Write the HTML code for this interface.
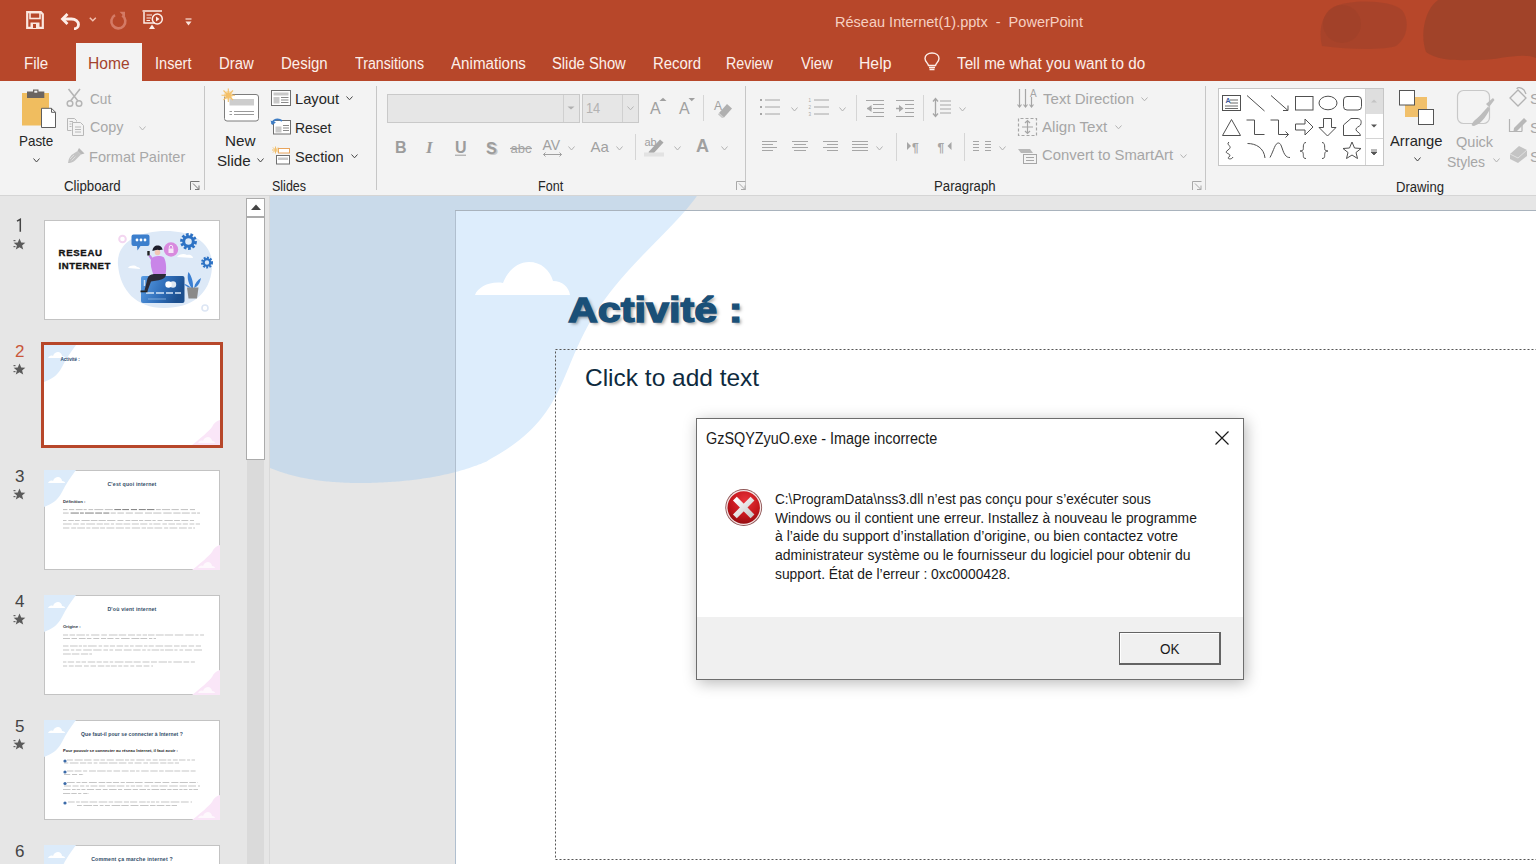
<!DOCTYPE html>
<html><head><meta charset="utf-8">
<style>
*{margin:0;padding:0;box-sizing:border-box}
html,body{width:1536px;height:864px;overflow:hidden;background:#e6e6e6;font-family:"Liberation Sans",sans-serif;}
.a{position:absolute}
.t{position:absolute;white-space:nowrap;line-height:1;transform-origin:0 0}
.num{position:absolute;left:12px;font-size:17px;color:#444;line-height:1}
</style></head><body>
<div class="a" style="left:0;top:0;width:1536px;height:81px;background:#b7472a"></div>
<svg class="a" style="left:1300px;top:0" width="236" height="81" viewBox="1300 0 236 81">
<path d="M1322,46 C1318,30 1322,12 1336,6 C1352,-1 1392,0 1402,10 C1410,20 1408,38 1396,46 C1386,50 1350,50 1322,46 Z" fill="#a6432a" opacity=".85"/>
<circle cx="1342" cy="24" r="19" fill="#9c4128" opacity=".45"/>
<path d="M1426,52 C1420,36 1424,10 1438,0 L1536,0 L1536,58 C1520,52 1500,60 1480,60 C1460,60 1440,62 1426,52 Z" fill="#9f4229" opacity=".9"/>
</svg>
<svg class="a" style="left:26px;top:11px" width="18" height="18" viewBox="0 0 18 18">
<path d="M1.2,1.2 H14.8 L16.8,3.2 V16.8 H1.2 Z" fill="none" stroke="#fbe7df" stroke-width="2.2"/>
<rect x="4" y="1.5" width="10" height="6" fill="none" stroke="#fbe7df" stroke-width="1.6"/>
<path d="M4.5,17 V11.5 H13.5 V17" fill="#fbe7df"/><rect x="7" y="13" width="3" height="4" fill="#b7472a"/>
</svg>
<svg class="a" style="left:60px;top:12px" width="21" height="18" viewBox="0 0 21 18">
<path d="M3.5,7 H11.5 C15.5,7 18.5,9.5 18.5,12.5 C18.5,15 16.5,16.8 14,16.8" fill="none" stroke="#fdeee8" stroke-width="2.8"/>
<path d="M7.5,2 L2.5,7 L7.5,12" fill="none" stroke="#fdeee8" stroke-width="2.8"/>
</svg>
<svg class="a" style="left:89px;top:17px" width="8" height="5"><path d="M0.8,0.8 L3.8,3.8 L6.8,0.8" fill="none" stroke="#f3c2b2" stroke-width="1.5"/></svg>
<svg class="a" style="left:109px;top:11px" width="19" height="19" viewBox="0 0 19 19">
<path d="M13.2,4.5 A7,7 0 1 1 6,4.2" fill="none" stroke="#d47a65" stroke-width="2.6"/>
<path d="M10.5,0.8 L16,0.8 L16,6.3 Z" fill="#d47a65"/>
</svg>
<svg class="a" style="left:142px;top:10px" width="22" height="20" viewBox="0 0 22 20">
<path d="M0.5,1 H20" stroke="#fdeee8" stroke-width="1.5"/>
<path d="M2,2 V13 H13" fill="none" stroke="#fdeee8" stroke-width="1.5"/>
<path d="M4.5,5 H10 M4.5,8 H9 M4.5,10.5 H8" stroke="#fdeee8" stroke-width="1.2"/>
<circle cx="15.3" cy="9" r="5" fill="none" stroke="#fdeee8" stroke-width="1.5"/>
<path d="M14,6.5 L17.5,9 L14,11.5 Z" fill="#fdeee8"/>
<path d="M7,19 L10,14.5 L13,19 Z" fill="#fdeee8"/>
</svg>
<svg class="a" style="left:185px;top:18px" width="7" height="8" viewBox="0 0 7 8">
<path d="M0.5,1 H6.5" stroke="#fbe3da" stroke-width="1.2"/><path d="M0.5,3.5 H6.5 L3.5,7.5 Z" fill="#fbe3da"/>
</svg>
<div class="t" style="left:834.53px;top:14.20px;font-size:15px;color:#f6d0c2;transform:scaleX(0.9686);">Réseau Internet(1).pptx&nbsp; - &nbsp;PowerPoint</div>
<div class="a" style="left:76px;top:43px;width:66px;height:38px;background:#f3f3f3"></div>
<div class="t" style="left:23.56px;top:55.80px;font-size:16px;color:#fdf0ea;transform:scaleX(0.9400);">File</div>
<div class="t" style="left:155.39px;top:55.80px;font-size:16px;color:#fdf0ea;transform:scaleX(0.9103);">Insert</div>
<div class="t" style="left:218.57px;top:55.80px;font-size:16px;color:#fdf0ea;transform:scaleX(0.9297);">Draw</div>
<div class="t" style="left:280.66px;top:55.80px;font-size:16px;color:#fdf0ea;transform:scaleX(0.9375);">Design</div>
<div class="t" style="left:354.70px;top:55.80px;font-size:16px;color:#fdf0ea;transform:scaleX(0.8885);">Transitions</div>
<div class="t" style="left:451.20px;top:55.80px;font-size:16px;color:#fdf0ea;transform:scaleX(0.9468);">Animations</div>
<div class="t" style="left:552.28px;top:55.80px;font-size:16px;color:#fdf0ea;transform:scaleX(0.9215);">Slide Show</div>
<div class="t" style="left:652.57px;top:55.80px;font-size:16px;color:#fdf0ea;transform:scaleX(0.9300);">Record</div>
<div class="t" style="left:726.41px;top:55.80px;font-size:16px;color:#fdf0ea;transform:scaleX(0.8923);">Review</div>
<div class="t" style="left:800.80px;top:55.80px;font-size:16px;color:#fdf0ea;transform:scaleX(0.9200);">View</div>
<div class="t" style="left:859.02px;top:55.80px;font-size:16px;color:#fdf0ea;transform:scaleX(0.9844);">Help</div>
<div class="t" style="left:956.50px;top:55.80px;font-size:16px;color:#fdf0ea;transform:scaleX(0.9538);">Tell me what you want to do</div>
<div class="t" style="left:87.52px;top:55.80px;font-size:16px;color:#a4432e;transform:scaleX(0.9756);">Home</div>
<svg class="a" style="left:923px;top:52px" width="18" height="20" viewBox="0 0 18 20">
<path d="M5.5,13.5 C5,11 2,9.5 2,6.5 C2,3.2 5,1 9,1 C13,1 16,3.2 16,6.5 C16,9.5 13,11 12.5,13.5 Z" fill="none" stroke="#fdeee8" stroke-width="1.4"/>
<path d="M6,15.5 H12 M6.5,17.5 H11.5" stroke="#fdeee8" stroke-width="1.3"/>
</svg>
<div class="a" style="left:0;top:81px;width:1536px;height:114px;background:#f3f3f3"></div>
<div class="a" style="left:0;top:195px;width:1536px;height:1px;background:#d5d5d5"></div>
<div class="a" style="left:204px;top:86px;width:1px;height:104px;background:#c6c6c6"></div>
<div class="a" style="left:376px;top:86px;width:1px;height:104px;background:#c6c6c6"></div>
<div class="a" style="left:745px;top:86px;width:1px;height:104px;background:#c6c6c6"></div>
<div class="a" style="left:1205px;top:86px;width:1px;height:104px;background:#c6c6c6"></div>
<svg class="a" style="left:20px;top:88px" width="40" height="42" viewBox="20 88 40 42">
<rect x="22" y="93" width="27" height="32.5" fill="#f0bd5f"/>
<rect x="27" y="91.5" width="17.3" height="6.5" fill="#6b6561"/>
<rect x="33" y="89.5" width="5.5" height="4" fill="#6b6561"/><rect x="34.3" y="90.7" width="3" height="2" fill="#f3f3f3"/>
<path d="M41.5,108.3 H51.5 L55.5,112.3 V127.5 H41.5 Z" fill="#fff" stroke="#5e5e5e" stroke-width="1"/>
<path d="M51.5,108.3 V112.3 H55.5" fill="none" stroke="#5e5e5e" stroke-width="1"/>
</svg>
<div class="t" style="left:18.51px;top:132.60px;font-size:15px;color:#262626;transform:scaleX(0.8946);">Paste</div>
<svg class="a" style="left:33.0px;top:157.5px" width="7" height="4"><path d="M0.5,0.5 L3.5,4.0 L6.5,0.5" fill="none" stroke="#444" stroke-width="1"/></svg>
<svg class="a" style="left:66px;top:88px" width="19" height="20" viewBox="0 0 19 20">
<path d="M2.5,1 L12,13 M14,1 L4.5,13" stroke="#b5b5b5" stroke-width="1.6"/>
<circle cx="4" cy="15.5" r="2.8" fill="none" stroke="#b5b5b5" stroke-width="1.5"/>
<circle cx="13" cy="15.5" r="2.8" fill="none" stroke="#b5b5b5" stroke-width="1.5"/>
</svg>
<svg class="a" style="left:66px;top:117px" width="20" height="20" viewBox="0 0 20 20">
<path d="M1.5,1.5 H8.5 L10.5,3.5 V4.5" fill="none" stroke="#b8b8b8" stroke-width="1"/>
<path d="M1.5,1.5 V13.5 H5.5" fill="none" stroke="#b8b8b8" stroke-width="1"/>
<path d="M3.5,4.5 H7 M3.5,7 H5.5 M3.5,9.5 H5.5" stroke="#b8b8b8" stroke-width="1"/>
<path d="M6.5,5.5 H14.5 L17.5,8.5 V18.5 H6.5 Z" fill="#f3f3f3" stroke="#b8b8b8" stroke-width="1"/>
<path d="M9,10 H15 M9,12.5 H15 M9,15 H15" stroke="#b8b8b8" stroke-width="1"/>
</svg>
<svg class="a" style="left:67px;top:147px" width="19" height="17" viewBox="0 0 19 17">
<path d="M12,1 L17.5,6.5 L14,7.5 L10.5,4 Z" fill="#b8b8b8"/>
<path d="M10.5,4 L14,7.5 L8,13.5 C6,15.5 3,16 1,16 C1.5,13 2,10.5 4.5,8 Z" fill="#c4c4c4"/>
<path d="M3,12 L7,8 M4.5,13.5 L8.5,9.5" stroke="#dcdcdc" stroke-width="1"/>
</svg>
<div class="t" style="left:90.00px;top:91.40px;font-size:15px;color:#a8a8a8;transform:scaleX(0.9083);">Cut</div>
<div class="t" style="left:90.00px;top:118.90px;font-size:15px;color:#a8a8a8;transform:scaleX(0.9571);">Copy</div>
<div class="t" style="left:89.43px;top:149.30px;font-size:15px;color:#a8a8a8;transform:scaleX(0.9704);">Format Painter</div>
<svg class="a" style="left:139.0px;top:125.5px" width="7" height="4"><path d="M0.5,0.5 L3.5,4.0 L6.5,0.5" fill="none" stroke="#b8b8b8" stroke-width="1"/></svg>
<div class="t" style="left:63.60px;top:178.90px;font-size:14px;color:#262626;transform:scaleX(0.9467);">Clipboard</div>
<svg class="a" style="left:189.5px;top:180.5px" width="11" height="10" viewBox="0 0 11 10"><path d="M0.5,9 V0.5 H9.5" fill="none" stroke="#777" stroke-width="1"/><path d="M3,2.5 L9,8.5 M5,8.5 H9 V4.5" fill="none" stroke="#777" stroke-width="1"/></svg>
<svg class="a" style="left:218px;top:87px" width="45" height="37" viewBox="218 87 45 37">
<rect x="224.5" y="94.5" width="34" height="26.5" rx="2.5" fill="#fff" stroke="#7d7d7d" stroke-width="1"/>
<rect x="229.5" y="99" width="24.5" height="6.5" fill="#cdcdcd"/>
<path d="M229.5,111.5 H232 M234,111.5 H254 M229.5,114.5 H232 M234,114.5 H254" stroke="#9a9a9a" stroke-width="1"/>
<circle cx="228.3" cy="95.3" r="4.3" fill="#f5d9a6"/>
<circle cx="228.3" cy="95.3" r="2.6" fill="#f3c06a"/>
<path d="M228.3,88.5 V102 M221.5,95.3 H235 M223.5,90.5 L233,100 M233,90.5 L223.5,100" stroke="#f3c06a" stroke-width="1.1"/>
</svg>
<div class="t" style="left:225.28px;top:132.60px;font-size:15px;color:#262626;transform:scaleX(1.0172);">New</div>
<div class="t" style="left:216.59px;top:152.60px;font-size:15px;color:#262626;transform:scaleX(1.0094);">Slide</div>
<svg class="a" style="left:256.5px;top:157.5px" width="7" height="4"><path d="M0.5,0.5 L3.5,4.0 L6.5,0.5" fill="none" stroke="#444" stroke-width="1"/></svg>
<svg class="a" style="left:270px;top:89px" width="22" height="18" viewBox="270 89 22 18">
<rect x="271.5" y="90.5" width="19" height="15" fill="#fff" stroke="#6f6f6f" stroke-width="1"/>
<rect x="273.5" y="92.5" width="15" height="3" fill="#c9c9c9"/>
<rect x="273.5" y="97" width="6" height="6.5" fill="#c9c9c9"/>
<path d="M281,97.5 H288.5 M281,100 H288.5 M281,102.5 H288.5" stroke="#8a8a8a" stroke-width="1"/>
</svg>
<svg class="a" style="left:270px;top:117px" width="22" height="19" viewBox="270 117 22 19">
<rect x="273.5" y="120.5" width="17" height="13.5" fill="#fff" stroke="#6f6f6f" stroke-width="1"/>
<rect x="275.5" y="126.5" width="6" height="6" fill="#c9c9c9"/>
<path d="M283,125.5 H289 M283,128 H289 M283,130.5 H289" stroke="#8a8a8a" stroke-width="1"/>
<path d="M272,124 C273,119.5 278,118 282,121" fill="none" stroke="#3f7dc4" stroke-width="1.8"/>
<path d="M270.5,120.5 L272,125 L276,122.5 Z" fill="#3f7dc4"/>
</svg>
<svg class="a" style="left:271px;top:146px" width="21" height="20" viewBox="271 146 21 20">
<rect x="278.5" y="148.5" width="11" height="4.5" fill="#fff" stroke="#e8a45c" stroke-width="1"/>
<rect x="276.5" y="155.5" width="13" height="8.5" fill="#fff" stroke="#6f6f6f" stroke-width="1"/>
<rect x="278" y="157.5" width="10" height="2.5" fill="#c9c9c9"/>
<path d="M275.5,146.5 V153.5 M272,150 H279 M273,147.5 L278,152.5 M278,147.5 L273,152.5" stroke="#f3c06a" stroke-width="1"/>
</svg>
<div class="t" style="left:294.72px;top:90.50px;font-size:15px;color:#262626;transform:scaleX(0.9795);">Layout</div>
<div class="t" style="left:294.77px;top:119.80px;font-size:15px;color:#262626;transform:scaleX(0.9289);">Reset</div>
<div class="t" style="left:294.73px;top:149.00px;font-size:15px;color:#262626;transform:scaleX(0.9735);">Section</div>
<svg class="a" style="left:345.5px;top:96.0px" width="7" height="4"><path d="M0.5,0.5 L3.5,3.8 L6.5,0.5" fill="none" stroke="#444" stroke-width="1"/></svg>
<svg class="a" style="left:350.5px;top:154.2px" width="7" height="4"><path d="M0.5,0.5 L3.5,3.8 L6.5,0.5" fill="none" stroke="#444" stroke-width="1"/></svg>
<div class="t" style="left:272.41px;top:179.10px;font-size:14px;color:#262626;transform:scaleX(0.8919);">Slides</div>
<div class="a" style="left:387px;top:94px;width:193px;height:29px;background:#e6e6e6;border:1px solid #c9c9c9"></div>
<div class="a" style="left:563px;top:95px;width:1px;height:27px;background:#d0d0d0"></div>
<svg class="a" style="left:567px;top:106px" width="8" height="4"><path d="M0.5,0.5 H7.5 L4,3.5 Z" fill="#b0b0b0"/></svg>
<div class="a" style="left:582px;top:94px;width:57px;height:29px;background:#e6e6e6;border:1px solid #c9c9c9"></div>
<div class="a" style="left:622px;top:95px;width:1px;height:27px;background:#d0d0d0"></div>
<svg class="a" style="left:627.0px;top:106.0px" width="7" height="4"><path d="M0.5,0.5 L3.5,3.8 L6.5,0.5" fill="none" stroke="#b5b5b5" stroke-width="1"/></svg>
<div class="t" style="left:585.75px;top:100.30px;font-size:15px;color:#b3b3b3;transform:scaleX(0.8500);">14</div>
<svg class="a" style="left:649px;top:97px" width="46" height="19" viewBox="649 97 46 19">
<text x="650" y="114" font-family="Liberation Sans" font-size="16" fill="#a0a0a0">A</text>
<path d="M659.5,101 L663,97.8 L666.5,101 Z" fill="#a0a0a0"/>
<text x="679" y="114" font-family="Liberation Sans" font-size="16" fill="#a0a0a0">A</text>
<path d="M688.5,98 L695,98 L691.75,101.2 Z" fill="#a0a0a0"/>
</svg>
<div class="a" style="left:703px;top:95px;width:1px;height:26px;background:#d5d5d5"></div>
<svg class="a" style="left:713px;top:97px" width="21" height="22" viewBox="713 97 21 22">
<text x="714" y="110" font-family="Liberation Sans" font-size="12" fill="#a0a0a0">A</text>
<path d="M719,113 L727,104 L732,108.5 L724,117.5 Z" fill="#b0b0b0"/>
<path d="M719,113 L724,117.5 L722,118 L718,114.5 Z" fill="#c8c8c8"/>
</svg>
<svg class="a" style="left:390px;top:136px" width="150" height="22" viewBox="390 136 150 22">
<text x="395" y="153" font-family="Liberation Sans" font-weight="bold" font-size="16" fill="#9c9c9c">B</text>
<text x="426" y="153" font-family="Liberation Serif" font-style="italic" font-weight="bold" font-size="17" fill="#9c9c9c">I</text>
<text x="455" y="153" font-family="Liberation Sans" font-weight="bold" font-size="16" fill="#9c9c9c">U</text>
<path d="M455,155.2 H466" stroke="#9c9c9c" stroke-width="1"/>
<text x="487.5" y="154.5" font-family="Liberation Sans" font-weight="bold" font-size="16" fill="#c8c8c8">S</text>
<text x="486" y="153.5" font-family="Liberation Sans" font-weight="bold" font-size="16" fill="#9c9c9c">S</text>
<text x="510.5" y="153" font-family="Liberation Sans" font-size="13" fill="#a4a4a4">abc</text>
<path d="M510,148.5 H532" stroke="#a4a4a4" stroke-width="1.2"/>
</svg>
<svg class="a" style="left:540px;top:137px" width="28" height="22" viewBox="540 137 28 22">
<text x="542.5" y="150" font-family="Liberation Sans" font-size="14" fill="#a0a0a0">AV</text>
<path d="M543.5,154.5 H561.5 M545.5,152.5 L543.5,154.5 L545.5,156.5 M559.5,152.5 L561.5,154.5 L559.5,156.5" fill="none" stroke="#a0a0a0" stroke-width="1"/>
</svg>
<svg class="a" style="left:568.0px;top:146.0px" width="7" height="4"><path d="M0.5,0.5 L3.5,4.0 L6.5,0.5" fill="none" stroke="#b3b3b3" stroke-width="1"/></svg>
<svg class="a" style="left:589px;top:139px" width="22" height="16" viewBox="589 139 22 16"><text x="590.5" y="152" font-family="Liberation Sans" font-size="15" fill="#a0a0a0">Aa</text></svg>
<svg class="a" style="left:616.0px;top:146.0px" width="7" height="4"><path d="M0.5,0.5 L3.5,4.0 L6.5,0.5" fill="none" stroke="#b3b3b3" stroke-width="1"/></svg>
<div class="a" style="left:635px;top:134px;width:1px;height:26px;background:#d5d5d5"></div>
<svg class="a" style="left:643px;top:135px" width="22" height="23" viewBox="643 135 22 23">
<text x="644.5" y="145.5" font-family="Liberation Sans" font-size="11" fill="#a0a0a0">ab</text>
<path d="M649,151.5 L660,139.5 L663.5,142.5 L652.5,154.5 L648,155 Z" fill="#a8a8a8"/>
<rect x="644" y="152.5" width="20" height="4" fill="#e2e2e2"/>
</svg>
<svg class="a" style="left:674.0px;top:146.0px" width="7" height="4"><path d="M0.5,0.5 L3.5,4.0 L6.5,0.5" fill="none" stroke="#b3b3b3" stroke-width="1"/></svg>
<svg class="a" style="left:695px;top:136px" width="18" height="18" viewBox="695 136 18 18"><text x="696" y="151.5" font-family="Liberation Sans" font-weight="bold" font-size="18" fill="#a0a0a0">A</text></svg>
<svg class="a" style="left:721.0px;top:146.0px" width="7" height="4"><path d="M0.5,0.5 L3.5,4.0 L6.5,0.5" fill="none" stroke="#b3b3b3" stroke-width="1"/></svg>
<div class="t" style="left:537.85px;top:178.90px;font-size:14px;color:#262626;transform:scaleX(0.8981);">Font</div>
<svg class="a" style="left:735.5px;top:180.5px" width="11" height="10" viewBox="0 0 11 10"><path d="M0.5,9 V0.5 H9.5" fill="none" stroke="#a8a8a8" stroke-width="1"/><path d="M3,2.5 L9,8.5 M5,8.5 H9 V4.5" fill="none" stroke="#a8a8a8" stroke-width="1"/></svg>
<svg class="a" style="left:758px;top:96px" width="210" height="24" viewBox="758 96 210 24">
<g fill="#a6a6a6"><rect x="760" y="99" width="2" height="2"/><rect x="760" y="106" width="2" height="2"/><rect x="760" y="113" width="2" height="2"/></g>
<path d="M765,100 H780 M765,107 H780 M765,114 H780" stroke="#a6a6a6" stroke-width="1"/>
<text x="808.5" y="102" font-family="Liberation Sans" font-size="4.5" fill="#a6a6a6">1</text>
<text x="808.5" y="109" font-family="Liberation Sans" font-size="4.5" fill="#a6a6a6">2</text>
<text x="808.5" y="116" font-family="Liberation Sans" font-size="4.5" fill="#a6a6a6">3</text>
<path d="M814,100 H829 M814,107 H829 M814,114 H829" stroke="#a6a6a6" stroke-width="1"/>
<path d="M866,100.5 H884 M873,104.5 H884 M873,108.5 H884 M873,112.5 H884 M866,116.5 H884" stroke="#a6a6a6" stroke-width="1"/>
<path d="M871.5,105 L867,108.5 L871.5,112 Z" fill="#a6a6a6"/><path d="M867,108.5 H872" stroke="#a6a6a6" stroke-width="1.5"/>
<path d="M896,100.5 H914 M905,104.5 H914 M905,108.5 H914 M905,112.5 H914 M896,116.5 H914" stroke="#a6a6a6" stroke-width="1"/>
<path d="M899,105 L903.5,108.5 L899,112 Z" fill="#a6a6a6"/><path d="M896,108.5 H900" stroke="#a6a6a6" stroke-width="1.5"/>
<path d="M940,101 H951 M940,105 H951 M940,109 H951 M940,113 H951" stroke="#a6a6a6" stroke-width="1"/>
<path d="M935.5,99 V116 M933,101.5 L935.5,98.5 L938,101.5 M933,113.5 L935.5,116.5 L938,113.5" fill="none" stroke="#a6a6a6" stroke-width="1.3"/>
</svg>
<svg class="a" style="left:790.5px;top:106.5px" width="7" height="4"><path d="M0.5,0.5 L3.5,4.0 L6.5,0.5" fill="none" stroke="#b3b3b3" stroke-width="1"/></svg>
<svg class="a" style="left:838.5px;top:106.5px" width="7" height="4"><path d="M0.5,0.5 L3.5,4.0 L6.5,0.5" fill="none" stroke="#b3b3b3" stroke-width="1"/></svg>
<svg class="a" style="left:958.8px;top:106.5px" width="7" height="4"><path d="M0.5,0.5 L3.5,4.0 L6.5,0.5" fill="none" stroke="#b3b3b3" stroke-width="1"/></svg>
<div class="a" style="left:856px;top:95px;width:1px;height:26px;background:#d5d5d5"></div>
<div class="a" style="left:923px;top:95px;width:1px;height:26px;background:#d5d5d5"></div>
<svg class="a" style="left:758px;top:138px" width="250" height="18" viewBox="758 138 250 18">
<g stroke="#a6a6a6" stroke-width="1">
<path d="M762,141.5 H777 M762,144.5 H773 M762,147.5 H777 M762,150.5 H773"/>
<path d="M792,141.5 H808 M794,144.5 H806 M792,147.5 H808 M794,150.5 H806"/>
<path d="M823,141.5 H838 M827,144.5 H838 M823,147.5 H838 M827,150.5 H838"/>
<path d="M852,141.5 H868 M852,144.5 H868 M852,147.5 H868 M852,150.5 H868"/>
<path d="M973,141.5 H979 M973,144.5 H979 M973,147.5 H979 M973,150.5 H979 M985,141.5 H991 M985,144.5 H991 M985,147.5 H991 M985,150.5 H991"/>
</g>
<path d="M907,142 L911,146 L907,150 Z" fill="#a6a6a6"/>
<text x="912" y="151.5" font-family="Liberation Sans" font-weight="bold" font-size="12" fill="#a6a6a6">¶</text>
<text x="937.5" y="151.5" font-family="Liberation Sans" font-weight="bold" font-size="12" fill="#a6a6a6">¶</text>
<path d="M951.5,142 L947.5,146 L951.5,150 Z" fill="#a6a6a6"/>
</svg>
<svg class="a" style="left:876.0px;top:145.5px" width="7" height="4"><path d="M0.5,0.5 L3.5,4.0 L6.5,0.5" fill="none" stroke="#b3b3b3" stroke-width="1"/></svg>
<svg class="a" style="left:998.6px;top:145.5px" width="7" height="4"><path d="M0.5,0.5 L3.5,4.0 L6.5,0.5" fill="none" stroke="#b3b3b3" stroke-width="1"/></svg>
<div class="a" style="left:896px;top:133px;width:1px;height:28px;background:#d5d5d5"></div>
<div class="a" style="left:964px;top:133px;width:1px;height:28px;background:#d5d5d5"></div>
<svg class="a" style="left:1016px;top:87px" width="24" height="80" viewBox="1016 87 24 80">
<g stroke="#a6a6a6" stroke-width="1.2" fill="none">
<path d="M1019.5,89 V107 M1025.5,89 V107 M1031.5,97 V107"/>
<path d="M1017.5,104.5 L1019.5,107 L1021.5,104.5 M1023.5,104.5 L1025.5,107 L1027.5,104.5 M1029.5,104.5 L1031.5,107 L1033.5,104.5"/>
<path d="M1018.5,118.5 V135.5 H1036.5 V118.5 Z" stroke-dasharray="3,2"/>
<path d="M1027.5,120.5 V133.5 M1025,123 L1027.5,120.5 L1030,123 M1025,131 L1027.5,133.5 L1030,131 M1022,127 H1033"/>
</g>
<text x="1030" y="97" font-family="Liberation Sans" font-size="10" fill="#a6a6a6">A</text>
<path d="M1018,149 H1030 L1033,153 H1021 Z" fill="#b8b8b8"/>
<rect x="1023.5" y="154.5" width="13" height="9" fill="#f3f3f3" stroke="#a6a6a6"/>
<path d="M1026,157.5 H1034 M1026,160.5 H1034" stroke="#a6a6a6"/>
</svg>
<div class="t" style="left:1043.00px;top:90.90px;font-size:15px;color:#a6a6a6;transform:scaleX(1.0022);">Text Direction</div>
<div class="t" style="left:1042.30px;top:119.30px;font-size:15px;color:#a6a6a6;transform:scaleX(1.0077);">Align Text</div>
<div class="t" style="left:1042.30px;top:147.40px;font-size:15px;color:#a6a6a6;transform:scaleX(0.9895);">Convert to SmartArt</div>
<svg class="a" style="left:1141.0px;top:96.5px" width="7" height="4"><path d="M0.5,0.5 L3.5,3.8 L6.5,0.5" fill="none" stroke="#b3b3b3" stroke-width="1"/></svg>
<svg class="a" style="left:1115.0px;top:125.0px" width="7" height="4"><path d="M0.5,0.5 L3.5,3.8 L6.5,0.5" fill="none" stroke="#b3b3b3" stroke-width="1"/></svg>
<svg class="a" style="left:1180.0px;top:154.0px" width="7" height="4"><path d="M0.5,0.5 L3.5,3.8 L6.5,0.5" fill="none" stroke="#b3b3b3" stroke-width="1"/></svg>
<div class="t" style="left:934.26px;top:178.90px;font-size:14px;color:#262626;transform:scaleX(0.9422);">Paragraph</div>
<svg class="a" style="left:1192.0px;top:180.5px" width="11" height="10" viewBox="0 0 11 10"><path d="M0.5,9 V0.5 H9.5" fill="none" stroke="#a8a8a8" stroke-width="1"/><path d="M3,2.5 L9,8.5 M5,8.5 H9 V4.5" fill="none" stroke="#a8a8a8" stroke-width="1"/></svg>
<div class="a" style="left:1218px;top:88px;width:166px;height:78px;background:#fff;border:1px solid #c6c6c6"></div>
<div class="a" style="left:1365px;top:89px;width:18px;height:25px;background:#dedede"></div>
<div class="a" style="left:1365px;top:89px;width:1px;height:76px;background:#d4d4d4"></div>
<div class="a" style="left:1365px;top:138px;width:18px;height:1px;background:#d4d4d4"></div>
<svg class="a" style="left:1218px;top:88px" width="166" height="78" viewBox="1218 88 166 78">
<path d="M1371,102.5 L1374,99.5 L1377,102.5 Z" fill="#c4c4c4"/>
<path d="M1371,124.5 H1377 L1374,127.5 Z" fill="#555"/>
<path d="M1371,150 H1377 M1371,152 H1377 L1374,155 Z" fill="#555" stroke="#555" stroke-width=".8"/>
<g fill="none" stroke="#505050" stroke-width="1">
<rect x="1222.5" y="95.5" width="18" height="15"/>
<path d="M1230,100 H1238 M1230,103 H1238 M1225,106 H1238 M1225,108.5 H1238" stroke="#6a6a6a"/>
<path d="M1247,95.5 L1264.5,111"/>
<path d="M1271,95.5 L1288,110.5 M1283,110.5 H1288 V105.5"/>
<rect x="1295.5" y="96.5" width="17.5" height="13.5"/>
<ellipse cx="1328" cy="103" rx="9" ry="6.8"/>
<rect x="1343.5" y="96.5" width="18" height="13.5" rx="3.5"/>
<path d="M1222.5,135.5 L1231.5,119.5 L1240.5,135.5 Z"/>
<path d="M1246.5,120 H1254.5 V134.5 H1264.5"/>
<path d="M1270.5,120 H1278.5 V134.5 H1288.5 M1285.5,131.5 L1288.5,134.5 L1285.5,137.5"/>
<path d="M1295.5,124 H1305 V119 L1313,127 L1305,135 V130 H1295.5 Z"/>
<path d="M1323.5,118.5 H1331.5 V127.5 H1336 L1327.5,136 L1319,127.5 H1323.5 Z"/>
<path d="M1343.5,135.5 V125 L1351,118.5 H1357 C1361,118.5 1362,121.5 1360.5,125 C1359,127 1356,127 1356,129.5 C1356,132 1360,132 1360.5,135.5 Z"/>
<path d="M1229,142 C1225,145 1234,146 1228,150 C1222,154 1233,153 1229,157 C1226,159 1232,160 1233,157"/>
<path d="M1247.5,143.5 C1256,143.5 1264,148 1265,158"/>
<path d="M1270,157.5 C1274,150 1275,143 1278.5,143 C1282,143 1282,152 1286,156 C1287,157 1288,157.5 1290,157.5"/>
<path d="M1306,142.5 C1302,142.5 1304,149 1303,150 C1302,151 1300,151 1300,151 C1302,151 1303,152 1303,153 C1304,155 1302,158.5 1306,158.5"/>
<path d="M1322,142.5 C1326,142.5 1324,149 1325,150 C1326,151 1328,151 1328,151 C1326,151 1325,152 1325,153 C1324,155 1326,158.5 1322,158.5"/>
<path d="M1352,142 L1354.5,148 L1361,148.5 L1356,152.5 L1357.5,158.5 L1352,155 L1346.5,158.5 L1348,152.5 L1343,148.5 L1349.5,148 Z"/>
</g>
<text x="1225.5" y="103" font-family="Liberation Sans" font-weight="bold" font-size="7" fill="#3b5a9a">A</text>
</svg>
<svg class="a" style="left:1397px;top:88px" width="40" height="40" viewBox="1397 88 40 40">
<rect x="1405" y="97" width="22" height="20" fill="#f1c06b"/>
<rect x="1399.5" y="90.5" width="15" height="14.5" fill="#fff" stroke="#555"/>
<rect x="1418.5" y="109.5" width="15" height="15" fill="#fff" stroke="#555"/>
</svg>
<div class="t" style="left:1390.30px;top:132.80px;font-size:15px;color:#262626;transform:scaleX(0.9830);">Arrange</div>
<svg class="a" style="left:1414.0px;top:157.0px" width="7" height="4"><path d="M0.5,0.5 L3.5,4.0 L6.5,0.5" fill="none" stroke="#444" stroke-width="1"/></svg>
<svg class="a" style="left:1455px;top:89px" width="40" height="40" viewBox="1455 89 40 40">
<rect x="1457.5" y="90.5" width="32" height="33" rx="6" fill="#f3f3f3" stroke="#c8c8c8" stroke-width="1.2"/>
<path d="M1486,104 L1493,98 L1494.5,100 L1489,107 Z" fill="#bdbdbd"/>
<path d="M1488,106.5 C1485,110 1480,116 1475,120 C1472,123 1470,126 1474,126 C1480,124 1485,119 1490,109 Z" fill="#bdbdbd"/>
</svg>
<div class="t" style="left:1456.40px;top:133.80px;font-size:15px;color:#a6a6a6;transform:scaleX(0.9684);">Quick</div>
<div class="t" style="left:1447.37px;top:153.50px;font-size:15px;color:#a6a6a6;transform:scaleX(0.9300);">Styles</div>
<svg class="a" style="left:1493.0px;top:157.5px" width="7" height="4"><path d="M0.5,0.5 L3.5,4.0 L6.5,0.5" fill="none" stroke="#b3b3b3" stroke-width="1"/></svg>
<svg class="a" style="left:1506px;top:87px" width="30" height="80" viewBox="1506 87 30 80">
<path d="M1510,98 L1518,90 L1526,98 L1518,106 Z" fill="none" stroke="#b3b3b3" stroke-width="1.3"/>
<path d="M1517,89 C1517,87 1521,87 1524,90 L1526,94" fill="none" stroke="#b3b3b3" stroke-width="1.3"/>
<path d="M1509.5,119 V131.5 H1522 M1522,124 V131.5" fill="none" stroke="#b3b3b3" stroke-width="1.2"/>
<path d="M1514,128 L1524,118 L1527,121 L1517,131 L1513.5,131.5 Z" fill="#b8b8b8"/>
<path d="M1510,154 L1519,146 L1527,150 L1527,156 L1518,163 L1510,159 Z" fill="#c4c4c4"/>
<path d="M1510,154 L1518,158 L1527,150" fill="none" stroke="#e0e0e0" stroke-width="1"/>
<text x="1530" y="104" font-family="Liberation Sans" font-size="15" fill="#a6a6a6">S</text>
<text x="1530" y="133" font-family="Liberation Sans" font-size="15" fill="#a6a6a6">S</text>
<text x="1530" y="162" font-family="Liberation Sans" font-size="15" fill="#a6a6a6">S</text>
</svg>
<div class="t" style="left:1395.56px;top:180.20px;font-size:14px;color:#262626;transform:scaleX(0.9360);">Drawing</div>
<!-- left panel -->
<div class="a" style="left:0;top:196px;width:269px;height:668px;background:#e6e6e6"></div>
<div class="a" style="left:269px;top:196px;width:2px;height:668px;background:#d9d9d9"></div>
<div class="a" style="left:247px;top:217px;width:17px;height:647px;background:#dadada"></div>
<div class="a" style="left:246px;top:198px;width:19px;height:19px;background:#fff;border:1px solid #ababab"></div>
<svg class="a" style="left:250px;top:203px" width="12" height="8"><path d="M1,7 L6,1.5 L11,7 Z" fill="#444"/></svg>
<div class="a" style="left:246px;top:217px;width:19px;height:243px;background:#fff;border:1px solid #ababab"></div>
<svg class="a" style="left:14px;top:218px" width="10" height="15" viewBox="0 0 10 15"><path d="M3,3.2 L6.3,1.3 V13.7" fill="none" stroke="#444" stroke-width="1.5"/></svg>
<div class="num" style="left:15px;top:343px;color:#c9563a;font-size:17px">2</div>
<div class="num" style="left:15px;top:468px;color:#444;font-size:17px">3</div>
<div class="num" style="left:15px;top:593px;color:#444;font-size:17px">4</div>
<div class="num" style="left:15px;top:718px;color:#444;font-size:17px">5</div>
<div class="num" style="left:15px;top:843px;color:#444;font-size:17px">6</div>
<svg class="a" style="left:10px;top:238px" width="16" height="13" viewBox="0 0 16 13"><path d="M9.5,0.5 L11.2,4.4 L15.3,4.7 L12.1,7.4 L13.2,11.5 L9.5,9.2 L5.8,11.5 L6.9,7.4 L3.7,4.7 L7.8,4.4 Z" fill="#5a5a5a"/><rect x="3.5" y="2" width="2" height="1.2" fill="#666"/><rect x="3.5" y="8" width="2" height="1.2" fill="#666"/></svg>
<svg class="a" style="left:10px;top:363px" width="16" height="13" viewBox="0 0 16 13"><path d="M9.5,0.5 L11.2,4.4 L15.3,4.7 L12.1,7.4 L13.2,11.5 L9.5,9.2 L5.8,11.5 L6.9,7.4 L3.7,4.7 L7.8,4.4 Z" fill="#5a5a5a"/><rect x="3.5" y="2" width="2" height="1.2" fill="#666"/><rect x="3.5" y="8" width="2" height="1.2" fill="#666"/></svg>
<svg class="a" style="left:10px;top:488px" width="16" height="13" viewBox="0 0 16 13"><path d="M9.5,0.5 L11.2,4.4 L15.3,4.7 L12.1,7.4 L13.2,11.5 L9.5,9.2 L5.8,11.5 L6.9,7.4 L3.7,4.7 L7.8,4.4 Z" fill="#5a5a5a"/><rect x="3.5" y="2" width="2" height="1.2" fill="#666"/><rect x="3.5" y="8" width="2" height="1.2" fill="#666"/></svg>
<svg class="a" style="left:10px;top:613px" width="16" height="13" viewBox="0 0 16 13"><path d="M9.5,0.5 L11.2,4.4 L15.3,4.7 L12.1,7.4 L13.2,11.5 L9.5,9.2 L5.8,11.5 L6.9,7.4 L3.7,4.7 L7.8,4.4 Z" fill="#5a5a5a"/><rect x="3.5" y="2" width="2" height="1.2" fill="#666"/><rect x="3.5" y="8" width="2" height="1.2" fill="#666"/></svg>
<svg class="a" style="left:10px;top:738px" width="16" height="13" viewBox="0 0 16 13"><path d="M9.5,0.5 L11.2,4.4 L15.3,4.7 L12.1,7.4 L13.2,11.5 L9.5,9.2 L5.8,11.5 L6.9,7.4 L3.7,4.7 L7.8,4.4 Z" fill="#5a5a5a"/><rect x="3.5" y="2" width="2" height="1.2" fill="#666"/><rect x="3.5" y="8" width="2" height="1.2" fill="#666"/></svg>
<svg class="a" style="left:44px;top:220px" width="176" height="100" viewBox="0 0 176 100">
<rect x="0.5" y="0.5" width="175" height="99" fill="#fff" stroke="#c3c3c3"/>
<text x="14.5" y="35.5" font-family="Liberation Sans" font-weight="bold" font-size="9.6" fill="#141414" stroke="#141414" stroke-width=".35" letter-spacing=".7">RESEAU</text>
<text x="14.5" y="48.5" font-family="Liberation Sans" font-weight="bold" font-size="9.6" fill="#141414" stroke="#141414" stroke-width=".35" letter-spacing=".55">INTERNET</text>
<path d="M74,45 C72,24 92,11 122,11 C150,11 170,24 168,48 C166,74 148,88 120,88 C92,88 76,70 74,45 Z" fill="#dde9f7"/>
<circle cx="78.5" cy="19" r="3.3" fill="none" stroke="#f3d6f0" stroke-width="2"/>
<circle cx="161" cy="88" r="3" fill="none" stroke="#dde6f4" stroke-width="1.6"/>
<path d="M133,37 c2,-3 7,-4 10,-2 c3,-1 6,1 6,3 z" fill="#fff"/>
<path d="M84,48 c2,-3 7,-3 9,-1 c2,0 3,1 3,2 z" fill="#fff"/>
<path d="M89.5,14.5 h14 a2,2 0 0 1 2,2 v7.5 a2,2 0 0 1 -2,2 h-7 l-3,4.5 l-0.5,-4.5 h-3.5 a2,2 0 0 1 -2,-2 v-7.5 a2,2 0 0 1 2,-2 z" fill="#3c7fcd"/>
<g fill="#fff"><circle cx="93" cy="20" r="1.4"/><circle cx="97" cy="20" r="1.4"/><circle cx="101" cy="20" r="1.4"/></g>
<circle cx="127" cy="29.5" r="7.2" fill="#d88ade"/>
<rect x="124.5" y="28.5" width="5" height="4.5" fill="#f7e6f8"/><path d="M125.3,28.5 v-1.5 a1.7,1.7 0 0 1 3.4,0 v1.5" fill="none" stroke="#f7e6f8" stroke-width="1"/>
<circle cx="144.5" cy="21.5" r="6.8" fill="none" stroke="#2d72c4" stroke-width="3.2" stroke-dasharray="2.6,1.6"/>
<circle cx="144.5" cy="21.5" r="4.8" fill="none" stroke="#2d72c4" stroke-width="3"/>
<circle cx="163" cy="42.5" r="4.6" fill="none" stroke="#2d72c4" stroke-width="2.8" stroke-dasharray="1.8,1.2"/>
<circle cx="163" cy="42.5" r="3.3" fill="none" stroke="#2d72c4" stroke-width="2.2"/>
<defs><linearGradient id="cg" x1="0" x2="1" y1="0" y2="0.3"><stop offset="0" stop-color="#5a9ee6"/><stop offset=".6" stop-color="#2f6db8"/><stop offset="1" stop-color="#1c4f8e"/></linearGradient></defs>
<rect x="97" y="56" width="43.5" height="27" rx="2" fill="url(#cg)"/>
<circle cx="124.5" cy="64.5" r="3.2" fill="#fff"/><circle cx="129" cy="64.5" r="3.2" fill="#fff" opacity=".85"/>
<path d="M102,73 h8 M112,73 h8 M122,73 h7 M131,73 h6" stroke="#d6e6f8" stroke-width="1.5"/>
<path d="M104,79 h18" stroke="#8fb6e0" stroke-width=".8"/>
<path d="M100.5,60 v6" stroke="#cfe0f5" stroke-width="1.5"/>
<path d="M108.5,31 c0,-3.5 2.5,-5.5 5,-5.5 c3,0 5,2 5,4.5 c-1.5,-0.5 -3,0 -4,1 c-2,-1 -4,-1 -6,0 z" fill="#1c1c2a"/>
<circle cx="113.5" cy="32.5" r="2.8" fill="#f2c7b5"/>
<path d="M107,39 c2,-3 9,-4 13,-1.5 c2.5,5 2.5,12 1.5,17 l-12,0.5 c-2,-5 -3.5,-11 -2.5,-16 z" fill="#c985e8"/>
<path d="M107,40 l-2.5,-4 l2,-1 l3,4 z" fill="#c985e8"/>
<rect x="103.3" y="31" width="2.4" height="4.5" fill="#222"/>
<path d="M110,54 l12,0 c0,4 -4,6 -9,6.5 l-6,1 l-3.5,9.5 l-3,-0.5 l3,-12 c1,-3 3,-4 6.5,-4.5 z" fill="#2b2b38"/>
<path d="M96.5,70.5 h7 v1.8 h-7 z" fill="#222"/>
<path d="M147.5,68 c-4,-6 -4.5,-12 -3,-16 c3,4 5,10 4.5,16 z M150,68 c1,-5 3.5,-8 7,-10 c-1,5 -3,8.5 -7,10 z M147,68 c-3,-3 -5,-4 -7,-4 c2,2 3.5,3.5 7,4z" fill="#3b7fd2"/>
<path d="M143,67.5 h11.5 l-1.5,11 h-8.5 z" fill="#8a8a8a"/>
</svg>
<div class="a" style="left:41px;top:342px;width:182px;height:106px;border:3px solid #b7472a;background:#fff"></div>
<svg class="a" style="left:44px;top:345px" width="176" height="100" viewBox="0 0 176 100"><path d="M0,0 L32,0 C26,8 22,14 18,22 C14,30 8,34 0,37 Z" fill="#dcebfa"/><path d="M4,13 C5,11 7,10 9,11 C10,8 12,7 14,7 C16,7 18,9 18,11 C20,11 21,12 21,13 Z" fill="#fff"/><path d="M176,100 L148,100 C157,93 165,86 168,82 C170,78 172,76 176,75 Z" fill="#fae6f8"/><path d="M154,98 C155,96 157,95 159,96 C160,93 162,92 164,92 C166,92 168,94 168,96 C170,96 171,97 171,98 Z" fill="#fff" opacity=".7"/><text x="16.5" y="15.5" font-family="Liberation Sans" font-weight="bold" font-size="4.6" fill="#27466a">Activité :</text></svg>
<svg class="a" style="left:44px;top:470px" width="176" height="100" viewBox="0 0 176 100"><rect x="0.5" y="0.5" width="175" height="99" fill="#fff" stroke="#c3c3c3"/><path d="M0,0 L32,0 C26,8 22,14 18,22 C14,30 8,34 0,37 Z" fill="#dcebfa"/><path d="M4,13 C5,11 7,10 9,11 C10,8 12,7 14,7 C16,7 18,9 18,11 C20,11 21,12 21,13 Z" fill="#fff"/><path d="M176,100 L148,100 C157,93 165,86 168,82 C170,78 172,76 176,75 Z" fill="#fae6f8"/><path d="M154,98 C155,96 157,95 159,96 C160,93 162,92 164,92 C166,92 168,94 168,96 C170,96 171,97 171,98 Z" fill="#fff" opacity=".7"/><text x="88" y="16" text-anchor="middle" font-family="Liberation Sans" font-weight="bold" font-size="5.2" fill="#2f4a66" letter-spacing=".2">C'est quoi internet</text><text x="19" y="32.5" font-family="Liberation Sans" font-weight="bold" font-size="4.3" fill="#2a3440">Définition :</text><rect x="19.0" y="39.0" width="4.4" height="1.1" fill="#c6c6c6"/><rect x="25.0" y="39.0" width="5.2" height="1.1" fill="#c6c6c6"/><rect x="31.8" y="39.0" width="6.8" height="1.1" fill="#c6c6c6"/><rect x="39.6" y="39.0" width="3.1" height="1.1" fill="#c6c6c6"/><rect x="44.5" y="39.0" width="4.6" height="1.1" fill="#c6c6c6"/><rect x="50.3" y="39.0" width="9.0" height="1.1" fill="#c6c6c6"/><rect x="60.8" y="39.0" width="8.0" height="1.1" fill="#c6c6c6"/><rect x="70.3" y="39.0" width="6.8" height="1.1" fill="#8a8a8a"/><rect x="78.2" y="39.0" width="6.8" height="1.1" fill="#8a8a8a"/><rect x="86.9" y="39.0" width="6.1" height="1.1" fill="#8a8a8a"/><rect x="94.8" y="39.0" width="7.0" height="1.1" fill="#8a8a8a"/><rect x="102.9" y="39.0" width="7.5" height="1.1" fill="#8a8a8a"/><rect x="112.0" y="39.0" width="4.8" height="1.1" fill="#c6c6c6"/><rect x="117.9" y="39.0" width="8.2" height="1.1" fill="#c6c6c6"/><rect x="127.5" y="39.0" width="7.3" height="1.1" fill="#c6c6c6"/><rect x="136.7" y="39.0" width="7.3" height="1.1" fill="#c6c6c6"/><rect x="145.9" y="39.0" width="5.1" height="1.1" fill="#c6c6c6"/><rect x="19.0" y="42.5" width="5.7" height="1.1" fill="#c6c6c6"/><rect x="26.6" y="42.5" width="8.3" height="1.1" fill="#8a8a8a"/><rect x="36.0" y="42.5" width="3.8" height="1.1" fill="#8a8a8a"/><rect x="41.0" y="42.5" width="8.8" height="1.1" fill="#8a8a8a"/><rect x="51.2" y="42.5" width="6.8" height="1.1" fill="#8a8a8a"/><rect x="59.3" y="42.5" width="6.0" height="1.1" fill="#8a8a8a"/><rect x="66.7" y="42.5" width="5.1" height="1.1" fill="#c6c6c6"/><rect x="73.4" y="42.5" width="6.5" height="1.1" fill="#c6c6c6"/><rect x="81.8" y="42.5" width="7.1" height="1.1" fill="#c6c6c6"/><rect x="90.8" y="42.5" width="8.1" height="1.1" fill="#c6c6c6"/><rect x="101.0" y="42.5" width="7.0" height="1.1" fill="#c6c6c6"/><rect x="109.2" y="42.5" width="8.2" height="1.1" fill="#c6c6c6"/><rect x="119.3" y="42.5" width="8.4" height="1.1" fill="#c6c6c6"/><rect x="129.3" y="42.5" width="7.3" height="1.1" fill="#c6c6c6"/><rect x="137.8" y="42.5" width="8.0" height="1.1" fill="#c6c6c6"/><rect x="147.4" y="42.5" width="4.7" height="1.1" fill="#c6c6c6"/><rect x="153.1" y="42.5" width="2.9" height="1.1" fill="#c6c6c6"/><rect x="19.0" y="50.0" width="3.5" height="1.0" fill="#c6c6c6"/><rect x="24.3" y="50.0" width="5.5" height="1.0" fill="#c6c6c6"/><rect x="30.9" y="50.0" width="4.8" height="1.0" fill="#c6c6c6"/><rect x="37.5" y="50.0" width="8.2" height="1.0" fill="#c6c6c6"/><rect x="46.8" y="50.0" width="6.7" height="1.0" fill="#c6c6c6"/><rect x="54.5" y="50.0" width="7.3" height="1.0" fill="#c6c6c6"/><rect x="63.1" y="50.0" width="8.3" height="1.0" fill="#c6c6c6"/><rect x="73.4" y="50.0" width="6.0" height="1.0" fill="#c6c6c6"/><rect x="81.4" y="50.0" width="4.9" height="1.0" fill="#c6c6c6"/><rect x="87.4" y="50.0" width="6.6" height="1.0" fill="#c6c6c6"/><rect x="95.0" y="50.0" width="4.2" height="1.0" fill="#c6c6c6"/><rect x="100.6" y="50.0" width="6.7" height="1.0" fill="#c6c6c6"/><rect x="108.4" y="50.0" width="3.3" height="1.0" fill="#c6c6c6"/><rect x="113.5" y="50.0" width="4.9" height="1.0" fill="#c6c6c6"/><rect x="120.4" y="50.0" width="8.4" height="1.0" fill="#c6c6c6"/><rect x="130.1" y="50.0" width="5.8" height="1.0" fill="#c6c6c6"/><rect x="137.4" y="50.0" width="6.9" height="1.0" fill="#c6c6c6"/><rect x="145.9" y="50.0" width="4.1" height="1.0" fill="#c6c6c6"/><rect x="19.0" y="53.5" width="8.6" height="1.0" fill="#c6c6c6"/><rect x="29.2" y="53.5" width="5.6" height="1.0" fill="#c6c6c6"/><rect x="36.5" y="53.5" width="4.4" height="1.0" fill="#c6c6c6"/><rect x="42.2" y="53.5" width="8.9" height="1.0" fill="#c6c6c6"/><rect x="52.6" y="53.5" width="6.3" height="1.0" fill="#c6c6c6"/><rect x="59.9" y="53.5" width="5.5" height="1.0" fill="#c6c6c6"/><rect x="66.9" y="53.5" width="3.1" height="1.0" fill="#c6c6c6"/><rect x="71.7" y="53.5" width="6.8" height="1.0" fill="#c6c6c6"/><rect x="79.5" y="53.5" width="6.8" height="1.0" fill="#c6c6c6"/><rect x="87.8" y="53.5" width="7.1" height="1.0" fill="#c6c6c6"/><rect x="96.2" y="53.5" width="7.2" height="1.0" fill="#c6c6c6"/><rect x="105.2" y="53.5" width="3.1" height="1.0" fill="#c6c6c6"/><rect x="109.4" y="53.5" width="7.1" height="1.0" fill="#c6c6c6"/><rect x="118.4" y="53.5" width="4.5" height="1.0" fill="#c6c6c6"/><rect x="124.4" y="53.5" width="6.6" height="1.0" fill="#c6c6c6"/><rect x="132.2" y="53.5" width="5.2" height="1.0" fill="#c6c6c6"/><rect x="138.7" y="53.5" width="5.2" height="1.0" fill="#c6c6c6"/><rect x="145.5" y="53.5" width="4.8" height="1.0" fill="#c6c6c6"/><rect x="151.7" y="53.5" width="4.3" height="1.0" fill="#c6c6c6"/><rect x="19.0" y="57.5" width="6.4" height="1.0" fill="#c6c6c6"/><rect x="27.2" y="57.5" width="4.9" height="1.0" fill="#c6c6c6"/><rect x="33.2" y="57.5" width="7.8" height="1.0" fill="#c6c6c6"/><rect x="42.3" y="57.5" width="4.1" height="1.0" fill="#c6c6c6"/><rect x="47.9" y="57.5" width="7.2" height="1.0" fill="#c6c6c6"/><rect x="56.1" y="57.5" width="4.9" height="1.0" fill="#c6c6c6"/><rect x="62.4" y="57.5" width="8.0" height="1.0" fill="#c6c6c6"/><rect x="71.8" y="57.5" width="8.1" height="1.0" fill="#c6c6c6"/><rect x="81.2" y="57.5" width="5.0" height="1.0" fill="#c6c6c6"/><rect x="87.8" y="57.5" width="8.3" height="1.0" fill="#c6c6c6"/><rect x="97.6" y="57.5" width="4.4" height="1.0" fill="#c6c6c6"/><rect x="103.1" y="57.5" width="6.2" height="1.0" fill="#c6c6c6"/><rect x="110.4" y="57.5" width="7.8" height="1.0" fill="#c6c6c6"/><rect x="120.1" y="57.5" width="4.1" height="1.0" fill="#c6c6c6"/><rect x="125.5" y="57.5" width="7.8" height="1.0" fill="#c6c6c6"/><rect x="135.0" y="57.5" width="7.8" height="1.0" fill="#c6c6c6"/><rect x="144.2" y="57.5" width="3.8" height="1.0" fill="#c6c6c6"/><rect x="149.2" y="57.5" width="1.8" height="1.0" fill="#c6c6c6"/></svg>
<svg class="a" style="left:44px;top:595px" width="176" height="100" viewBox="0 0 176 100"><rect x="0.5" y="0.5" width="175" height="99" fill="#fff" stroke="#c3c3c3"/><path d="M0,0 L32,0 C26,8 22,14 18,22 C14,30 8,34 0,37 Z" fill="#dcebfa"/><path d="M4,13 C5,11 7,10 9,11 C10,8 12,7 14,7 C16,7 18,9 18,11 C20,11 21,12 21,13 Z" fill="#fff"/><path d="M176,100 L148,100 C157,93 165,86 168,82 C170,78 172,76 176,75 Z" fill="#fae6f8"/><path d="M154,98 C155,96 157,95 159,96 C160,93 162,92 164,92 C166,92 168,94 168,96 C170,96 171,97 171,98 Z" fill="#fff" opacity=".7"/><text x="88" y="16" text-anchor="middle" font-family="Liberation Sans" font-weight="bold" font-size="5.2" fill="#2f4a66" letter-spacing=".2">D'où vient internet</text><text x="19" y="32.5" font-family="Liberation Sans" font-weight="bold" font-size="4.3" fill="#2a3440">Origine :</text><rect x="19.0" y="39.5" width="5.1" height="1.0" fill="#c6c6c6"/><rect x="25.5" y="39.5" width="5.5" height="1.0" fill="#c6c6c6"/><rect x="32.4" y="39.5" width="8.5" height="1.0" fill="#c6c6c6"/><rect x="42.1" y="39.5" width="3.0" height="1.0" fill="#c6c6c6"/><rect x="47.1" y="39.5" width="8.3" height="1.0" fill="#c6c6c6"/><rect x="57.3" y="39.5" width="5.6" height="1.0" fill="#c6c6c6"/><rect x="64.9" y="39.5" width="8.6" height="1.0" fill="#c6c6c6"/><rect x="74.7" y="39.5" width="7.5" height="1.0" fill="#c6c6c6"/><rect x="84.0" y="39.5" width="7.0" height="1.0" fill="#c6c6c6"/><rect x="92.5" y="39.5" width="4.7" height="1.0" fill="#c6c6c6"/><rect x="98.6" y="39.5" width="4.4" height="1.0" fill="#c6c6c6"/><rect x="104.0" y="39.5" width="6.5" height="1.0" fill="#c6c6c6"/><rect x="111.8" y="39.5" width="7.9" height="1.0" fill="#c6c6c6"/><rect x="120.7" y="39.5" width="8.4" height="1.0" fill="#c6c6c6"/><rect x="130.8" y="39.5" width="8.5" height="1.0" fill="#c6c6c6"/><rect x="141.3" y="39.5" width="8.4" height="1.0" fill="#c6c6c6"/><rect x="151.3" y="39.5" width="3.1" height="1.0" fill="#c6c6c6"/><rect x="156.1" y="39.5" width="3.9" height="1.0" fill="#c6c6c6"/><rect x="19.0" y="43.0" width="7.0" height="1.0" fill="#c6c6c6"/><rect x="27.5" y="43.0" width="5.5" height="1.0" fill="#c6c6c6"/><rect x="34.9" y="43.0" width="6.7" height="1.0" fill="#c6c6c6"/><rect x="42.9" y="43.0" width="4.5" height="1.0" fill="#c6c6c6"/><rect x="49.3" y="43.0" width="5.9" height="1.0" fill="#c6c6c6"/><rect x="57.0" y="43.0" width="5.1" height="1.0" fill="#c6c6c6"/><rect x="63.3" y="43.0" width="6.2" height="1.0" fill="#c6c6c6"/><rect x="71.3" y="43.0" width="4.0" height="1.0" fill="#c6c6c6"/><rect x="77.1" y="43.0" width="8.5" height="1.0" fill="#c6c6c6"/><rect x="87.4" y="43.0" width="7.9" height="1.0" fill="#c6c6c6"/><rect x="96.4" y="43.0" width="6.8" height="1.0" fill="#c6c6c6"/><rect x="105.0" y="43.0" width="3.3" height="1.0" fill="#c6c6c6"/><rect x="109.6" y="43.0" width="2.4" height="1.0" fill="#c6c6c6"/><rect x="19.0" y="50.5" width="5.5" height="1.0" fill="#c6c6c6"/><rect x="26.0" y="50.5" width="7.7" height="1.0" fill="#c6c6c6"/><rect x="34.7" y="50.5" width="3.3" height="1.0" fill="#c6c6c6"/><rect x="39.1" y="50.5" width="3.7" height="1.0" fill="#c6c6c6"/><rect x="43.9" y="50.5" width="8.8" height="1.0" fill="#c6c6c6"/><rect x="54.6" y="50.5" width="3.5" height="1.0" fill="#c6c6c6"/><rect x="59.7" y="50.5" width="4.9" height="1.0" fill="#c6c6c6"/><rect x="65.9" y="50.5" width="5.1" height="1.0" fill="#c6c6c6"/><rect x="72.6" y="50.5" width="6.5" height="1.0" fill="#c6c6c6"/><rect x="80.5" y="50.5" width="4.1" height="1.0" fill="#c6c6c6"/><rect x="86.0" y="50.5" width="3.7" height="1.0" fill="#c6c6c6"/><rect x="91.3" y="50.5" width="7.3" height="1.0" fill="#c6c6c6"/><rect x="100.0" y="50.5" width="3.5" height="1.0" fill="#c6c6c6"/><rect x="104.6" y="50.5" width="5.2" height="1.0" fill="#c6c6c6"/><rect x="111.5" y="50.5" width="7.7" height="1.0" fill="#c6c6c6"/><rect x="120.5" y="50.5" width="7.8" height="1.0" fill="#c6c6c6"/><rect x="130.0" y="50.5" width="5.6" height="1.0" fill="#c6c6c6"/><rect x="136.9" y="50.5" width="6.0" height="1.0" fill="#c6c6c6"/><rect x="144.6" y="50.5" width="5.5" height="1.0" fill="#c6c6c6"/><rect x="151.8" y="50.5" width="5.2" height="1.0" fill="#c6c6c6"/><rect x="19.0" y="54.5" width="6.2" height="1.0" fill="#c6c6c6"/><rect x="26.9" y="54.5" width="3.4" height="1.0" fill="#c6c6c6"/><rect x="31.8" y="54.5" width="5.6" height="1.0" fill="#c6c6c6"/><rect x="39.2" y="54.5" width="8.6" height="1.0" fill="#c6c6c6"/><rect x="49.2" y="54.5" width="8.4" height="1.0" fill="#c6c6c6"/><rect x="59.4" y="54.5" width="4.6" height="1.0" fill="#c6c6c6"/><rect x="65.4" y="54.5" width="3.7" height="1.0" fill="#c6c6c6"/><rect x="71.0" y="54.5" width="7.0" height="1.0" fill="#c6c6c6"/><rect x="79.8" y="54.5" width="7.8" height="1.0" fill="#c6c6c6"/><rect x="89.2" y="54.5" width="7.4" height="1.0" fill="#c6c6c6"/><rect x="98.2" y="54.5" width="3.6" height="1.0" fill="#c6c6c6"/><rect x="103.4" y="54.5" width="3.0" height="1.0" fill="#c6c6c6"/><rect x="107.6" y="54.5" width="7.6" height="1.0" fill="#c6c6c6"/><rect x="116.3" y="54.5" width="3.6" height="1.0" fill="#c6c6c6"/><rect x="120.9" y="54.5" width="8.3" height="1.0" fill="#c6c6c6"/><rect x="130.4" y="54.5" width="3.1" height="1.0" fill="#c6c6c6"/><rect x="135.4" y="54.5" width="3.7" height="1.0" fill="#c6c6c6"/><rect x="140.9" y="54.5" width="7.0" height="1.0" fill="#c6c6c6"/><rect x="149.8" y="54.5" width="8.2" height="1.0" fill="#c6c6c6"/><rect x="19.0" y="58.5" width="7.8" height="1.0" fill="#c6c6c6"/><rect x="27.8" y="58.5" width="7.6" height="1.0" fill="#c6c6c6"/><rect x="36.9" y="58.5" width="7.3" height="1.0" fill="#c6c6c6"/><rect x="45.3" y="58.5" width="2.7" height="1.0" fill="#c6c6c6"/><rect x="19.0" y="66.5" width="3.4" height="1.0" fill="#c6c6c6"/><rect x="23.7" y="66.5" width="6.4" height="1.0" fill="#c6c6c6"/><rect x="31.9" y="66.5" width="4.5" height="1.0" fill="#c6c6c6"/><rect x="37.5" y="66.5" width="4.5" height="1.0" fill="#c6c6c6"/><rect x="43.7" y="66.5" width="7.5" height="1.0" fill="#c6c6c6"/><rect x="52.6" y="66.5" width="5.2" height="1.0" fill="#c6c6c6"/><rect x="59.2" y="66.5" width="5.1" height="1.0" fill="#c6c6c6"/><rect x="65.7" y="66.5" width="3.5" height="1.0" fill="#c6c6c6"/><rect x="70.7" y="66.5" width="8.8" height="1.0" fill="#c6c6c6"/><rect x="80.9" y="66.5" width="7.5" height="1.0" fill="#c6c6c6"/><rect x="89.6" y="66.5" width="7.1" height="1.0" fill="#c6c6c6"/><rect x="98.5" y="66.5" width="7.0" height="1.0" fill="#c6c6c6"/><rect x="107.0" y="66.5" width="5.9" height="1.0" fill="#c6c6c6"/><rect x="114.6" y="66.5" width="8.4" height="1.0" fill="#c6c6c6"/><rect x="124.1" y="66.5" width="3.6" height="1.0" fill="#c6c6c6"/><rect x="129.4" y="66.5" width="8.5" height="1.0" fill="#c6c6c6"/><rect x="139.5" y="66.5" width="5.7" height="1.0" fill="#c6c6c6"/><rect x="146.8" y="66.5" width="4.1" height="1.0" fill="#c6c6c6"/><rect x="19.0" y="70.5" width="4.2" height="1.0" fill="#c6c6c6"/><rect x="24.8" y="70.5" width="4.9" height="1.0" fill="#c6c6c6"/><rect x="30.9" y="70.5" width="7.1" height="1.0" fill="#c6c6c6"/><rect x="40.0" y="70.5" width="4.8" height="1.0" fill="#c6c6c6"/><rect x="46.5" y="70.5" width="5.5" height="1.0" fill="#c6c6c6"/><rect x="53.8" y="70.5" width="6.5" height="1.0" fill="#c6c6c6"/><rect x="61.6" y="70.5" width="4.3" height="1.0" fill="#c6c6c6"/><rect x="66.9" y="70.5" width="5.9" height="1.0" fill="#c6c6c6"/><rect x="74.2" y="70.5" width="4.0" height="1.0" fill="#c6c6c6"/><rect x="79.6" y="70.5" width="4.9" height="1.0" fill="#c6c6c6"/><rect x="86.3" y="70.5" width="3.9" height="1.0" fill="#c6c6c6"/><rect x="92.1" y="70.5" width="5.9" height="1.0" fill="#c6c6c6"/><rect x="99.6" y="70.5" width="5.8" height="1.0" fill="#c6c6c6"/><rect x="107.3" y="70.5" width="1.7" height="1.0" fill="#c6c6c6"/></svg>
<svg class="a" style="left:44px;top:720px" width="176" height="100" viewBox="0 0 176 100"><rect x="0.5" y="0.5" width="175" height="99" fill="#fff" stroke="#c3c3c3"/><path d="M0,0 L32,0 C26,8 22,14 18,22 C14,30 8,34 0,37 Z" fill="#dcebfa"/><path d="M4,13 C5,11 7,10 9,11 C10,8 12,7 14,7 C16,7 18,9 18,11 C20,11 21,12 21,13 Z" fill="#fff"/><path d="M176,100 L148,100 C157,93 165,86 168,82 C170,78 172,76 176,75 Z" fill="#fae6f8"/><path d="M154,98 C155,96 157,95 159,96 C160,93 162,92 164,92 C166,92 168,94 168,96 C170,96 171,97 171,98 Z" fill="#fff" opacity=".7"/><text x="88" y="16" text-anchor="middle" font-family="Liberation Sans" font-weight="bold" font-size="5" fill="#2f4a66" letter-spacing=".1">Que faut-il pour se connecter à Internet ?</text><text x="19" y="32" font-family="Liberation Sans" font-weight="bold" font-size="4.1" fill="#222">Pour pouvoir se connecter au réseau Internet, il faut avoir :</text><rect x="23.0" y="39.5" width="5.9" height="1.0" fill="#c6c6c6"/><rect x="30.6" y="39.5" width="8.1" height="1.0" fill="#c6c6c6"/><rect x="40.1" y="39.5" width="7.4" height="1.0" fill="#c6c6c6"/><rect x="49.5" y="39.5" width="5.8" height="1.0" fill="#c6c6c6"/><rect x="56.5" y="39.5" width="4.4" height="1.0" fill="#c6c6c6"/><rect x="62.7" y="39.5" width="7.1" height="1.0" fill="#c6c6c6"/><rect x="71.7" y="39.5" width="8.1" height="1.0" fill="#c6c6c6"/><rect x="81.0" y="39.5" width="4.1" height="1.0" fill="#c6c6c6"/><rect x="86.4" y="39.5" width="4.1" height="1.0" fill="#c6c6c6"/><rect x="92.3" y="39.5" width="8.2" height="1.0" fill="#c6c6c6"/><rect x="102.3" y="39.5" width="4.5" height="1.0" fill="#c6c6c6"/><rect x="108.7" y="39.5" width="4.9" height="1.0" fill="#c6c6c6"/><rect x="115.0" y="39.5" width="7.4" height="1.0" fill="#c6c6c6"/><rect x="123.5" y="39.5" width="3.6" height="1.0" fill="#c6c6c6"/><rect x="128.9" y="39.5" width="4.8" height="1.0" fill="#c6c6c6"/><rect x="135.0" y="39.5" width="6.5" height="1.0" fill="#c6c6c6"/><rect x="143.1" y="39.5" width="3.0" height="1.0" fill="#c6c6c6"/><rect x="147.5" y="39.5" width="3.5" height="1.0" fill="#c6c6c6"/><rect x="20.0" y="42.5" width="4.3" height="1.0" fill="#c6c6c6"/><rect x="25.8" y="42.5" width="8.7" height="1.0" fill="#c6c6c6"/><rect x="36.0" y="42.5" width="6.3" height="1.0" fill="#c6c6c6"/><rect x="43.4" y="42.5" width="4.6" height="1.0" fill="#c6c6c6"/><rect x="49.7" y="42.5" width="3.7" height="1.0" fill="#c6c6c6"/><rect x="55.2" y="42.5" width="8.5" height="1.0" fill="#c6c6c6"/><rect x="64.8" y="42.5" width="8.6" height="1.0" fill="#c6c6c6"/><rect x="74.8" y="42.5" width="7.6" height="1.0" fill="#c6c6c6"/><rect x="84.2" y="42.5" width="4.8" height="1.0" fill="#c6c6c6"/><rect x="90.6" y="42.5" width="6.9" height="1.0" fill="#c6c6c6"/><rect x="99.4" y="42.5" width="4.6" height="1.0" fill="#c6c6c6"/><rect x="105.7" y="42.5" width="8.8" height="1.0" fill="#c6c6c6"/><rect x="116.2" y="42.5" width="6.2" height="1.0" fill="#c6c6c6"/><rect x="123.5" y="42.5" width="6.0" height="1.0" fill="#c6c6c6"/><rect x="130.8" y="42.5" width="4.2" height="1.0" fill="#c6c6c6"/><rect x="23.0" y="50.5" width="6.4" height="1.0" fill="#c6c6c6"/><rect x="30.6" y="50.5" width="6.9" height="1.0" fill="#c6c6c6"/><rect x="39.1" y="50.5" width="4.1" height="1.0" fill="#c6c6c6"/><rect x="45.0" y="50.5" width="6.9" height="1.0" fill="#c6c6c6"/><rect x="53.1" y="50.5" width="8.6" height="1.0" fill="#c6c6c6"/><rect x="62.8" y="50.5" width="5.0" height="1.0" fill="#c6c6c6"/><rect x="69.5" y="50.5" width="6.6" height="1.0" fill="#c6c6c6"/><rect x="77.7" y="50.5" width="6.9" height="1.0" fill="#c6c6c6"/><rect x="86.0" y="50.5" width="4.9" height="1.0" fill="#c6c6c6"/><rect x="92.1" y="50.5" width="3.4" height="1.0" fill="#c6c6c6"/><rect x="97.2" y="50.5" width="7.5" height="1.0" fill="#c6c6c6"/><rect x="106.3" y="50.5" width="7.4" height="1.0" fill="#c6c6c6"/><rect x="115.1" y="50.5" width="4.6" height="1.0" fill="#c6c6c6"/><rect x="121.1" y="50.5" width="8.2" height="1.0" fill="#c6c6c6"/><rect x="130.3" y="50.5" width="6.0" height="1.0" fill="#c6c6c6"/><rect x="137.6" y="50.5" width="7.6" height="1.0" fill="#c6c6c6"/><rect x="146.6" y="50.5" width="5.0" height="1.0" fill="#c6c6c6"/><rect x="20.0" y="54.0" width="6.2" height="1.0" fill="#c6c6c6"/><rect x="28.0" y="54.0" width="5.1" height="1.0" fill="#c6c6c6"/><rect x="35.0" y="54.0" width="3.7" height="1.0" fill="#c6c6c6"/><rect x="39.9" y="54.0" width="0.1" height="1.0" fill="#c6c6c6"/><rect x="23.0" y="62.0" width="7.7" height="1.0" fill="#c6c6c6"/><rect x="32.4" y="62.0" width="4.1" height="1.0" fill="#c6c6c6"/><rect x="37.7" y="62.0" width="5.5" height="1.0" fill="#c6c6c6"/><rect x="44.9" y="62.0" width="7.9" height="1.0" fill="#c6c6c6"/><rect x="54.6" y="62.0" width="6.6" height="1.0" fill="#c6c6c6"/><rect x="62.3" y="62.0" width="5.4" height="1.0" fill="#c6c6c6"/><rect x="68.9" y="62.0" width="6.2" height="1.0" fill="#c6c6c6"/><rect x="76.6" y="62.0" width="4.2" height="1.0" fill="#c6c6c6"/><rect x="82.1" y="62.0" width="7.7" height="1.0" fill="#c6c6c6"/><rect x="90.8" y="62.0" width="7.8" height="1.0" fill="#c6c6c6"/><rect x="100.5" y="62.0" width="8.7" height="1.0" fill="#c6c6c6"/><rect x="110.6" y="62.0" width="6.3" height="1.0" fill="#c6c6c6"/><rect x="118.5" y="62.0" width="6.8" height="1.0" fill="#c6c6c6"/><rect x="127.3" y="62.0" width="7.1" height="1.0" fill="#c6c6c6"/><rect x="135.7" y="62.0" width="8.2" height="1.0" fill="#c6c6c6"/><rect x="145.3" y="62.0" width="6.6" height="1.0" fill="#c6c6c6"/><rect x="153.6" y="62.0" width="0.4" height="1.0" fill="#c6c6c6"/><rect x="20.0" y="65.5" width="7.0" height="1.0" fill="#c6c6c6"/><rect x="28.5" y="65.5" width="6.1" height="1.0" fill="#c6c6c6"/><rect x="36.1" y="65.5" width="4.2" height="1.0" fill="#c6c6c6"/><rect x="41.8" y="65.5" width="3.2" height="1.0" fill="#c6c6c6"/><rect x="46.5" y="65.5" width="6.9" height="1.0" fill="#c6c6c6"/><rect x="54.8" y="65.5" width="6.4" height="1.0" fill="#c6c6c6"/><rect x="63.2" y="65.5" width="8.4" height="1.0" fill="#c6c6c6"/><rect x="72.6" y="65.5" width="7.8" height="1.0" fill="#c6c6c6"/><rect x="82.0" y="65.5" width="3.3" height="1.0" fill="#c6c6c6"/><rect x="86.7" y="65.5" width="4.4" height="1.0" fill="#c6c6c6"/><rect x="92.2" y="65.5" width="6.2" height="1.0" fill="#c6c6c6"/><rect x="100.3" y="65.5" width="4.9" height="1.0" fill="#c6c6c6"/><rect x="107.1" y="65.5" width="7.2" height="1.0" fill="#c6c6c6"/><rect x="115.4" y="65.5" width="8.1" height="1.0" fill="#c6c6c6"/><rect x="125.2" y="65.5" width="8.6" height="1.0" fill="#c6c6c6"/><rect x="135.5" y="65.5" width="7.4" height="1.0" fill="#c6c6c6"/><rect x="144.2" y="65.5" width="7.8" height="1.0" fill="#c6c6c6"/><rect x="154.0" y="65.5" width="2.0" height="1.0" fill="#c6c6c6"/><rect x="19.0" y="69.0" width="7.5" height="1.0" fill="#c6c6c6"/><rect x="28.0" y="69.0" width="3.7" height="1.0" fill="#c6c6c6"/><rect x="32.7" y="69.0" width="3.5" height="1.0" fill="#c6c6c6"/><rect x="37.4" y="69.0" width="4.0" height="1.0" fill="#c6c6c6"/><rect x="42.9" y="69.0" width="7.2" height="1.0" fill="#c6c6c6"/><rect x="51.6" y="69.0" width="5.5" height="1.0" fill="#c6c6c6"/><rect x="58.8" y="69.0" width="4.8" height="1.0" fill="#c6c6c6"/><rect x="65.1" y="69.0" width="7.5" height="1.0" fill="#c6c6c6"/><rect x="74.0" y="69.0" width="4.1" height="1.0" fill="#c6c6c6"/><rect x="80.0" y="69.0" width="7.3" height="1.0" fill="#c6c6c6"/><rect x="88.7" y="69.0" width="5.2" height="1.0" fill="#c6c6c6"/><rect x="95.4" y="69.0" width="6.6" height="1.0" fill="#c6c6c6"/><rect x="103.2" y="69.0" width="3.0" height="1.0" fill="#c6c6c6"/><rect x="107.5" y="69.0" width="7.7" height="1.0" fill="#c6c6c6"/><rect x="116.3" y="69.0" width="5.8" height="1.0" fill="#c6c6c6"/><rect x="123.3" y="69.0" width="4.3" height="1.0" fill="#c6c6c6"/><rect x="128.7" y="69.0" width="5.4" height="1.0" fill="#c6c6c6"/><rect x="135.3" y="69.0" width="3.2" height="1.0" fill="#c6c6c6"/><rect x="139.5" y="69.0" width="4.0" height="1.0" fill="#c6c6c6"/><rect x="145.0" y="69.0" width="3.4" height="1.0" fill="#c6c6c6"/><rect x="149.4" y="69.0" width="4.6" height="1.0" fill="#c6c6c6"/><rect x="19.0" y="73.0" width="7.2" height="1.0" fill="#c6c6c6"/><rect x="27.3" y="73.0" width="5.4" height="1.0" fill="#c6c6c6"/><rect x="34.1" y="73.0" width="3.2" height="1.0" fill="#c6c6c6"/><rect x="39.2" y="73.0" width="4.3" height="1.0" fill="#c6c6c6"/><rect x="44.6" y="73.0" width="0.4" height="1.0" fill="#c6c6c6"/><rect x="24.0" y="81.5" width="6.7" height="1.0" fill="#c6c6c6"/><rect x="32.1" y="81.5" width="3.7" height="1.0" fill="#c6c6c6"/><rect x="36.9" y="81.5" width="7.4" height="1.0" fill="#c6c6c6"/><rect x="45.5" y="81.5" width="7.7" height="1.0" fill="#c6c6c6"/><rect x="54.7" y="81.5" width="8.6" height="1.0" fill="#c6c6c6"/><rect x="64.6" y="81.5" width="4.5" height="1.0" fill="#c6c6c6"/><rect x="70.4" y="81.5" width="7.9" height="1.0" fill="#c6c6c6"/><rect x="79.9" y="81.5" width="5.1" height="1.0" fill="#c6c6c6"/><rect x="86.1" y="81.5" width="7.1" height="1.0" fill="#c6c6c6"/><rect x="95.1" y="81.5" width="6.6" height="1.0" fill="#c6c6c6"/><rect x="102.7" y="81.5" width="3.2" height="1.0" fill="#c6c6c6"/><rect x="106.9" y="81.5" width="4.0" height="1.0" fill="#c6c6c6"/><rect x="112.0" y="81.5" width="3.3" height="1.0" fill="#c6c6c6"/><rect x="117.0" y="81.5" width="8.4" height="1.0" fill="#c6c6c6"/><rect x="126.6" y="81.5" width="8.8" height="1.0" fill="#c6c6c6"/><rect x="136.9" y="81.5" width="7.8" height="1.0" fill="#c6c6c6"/><rect x="146.6" y="81.5" width="1.4" height="1.0" fill="#c6c6c6"/><rect x="33.0" y="85.0" width="4.8" height="1.0" fill="#c6c6c6"/><rect x="39.4" y="85.0" width="8.7" height="1.0" fill="#c6c6c6"/><rect x="49.2" y="85.0" width="4.8" height="1.0" fill="#c6c6c6"/><rect x="55.8" y="85.0" width="3.7" height="1.0" fill="#c6c6c6"/><rect x="60.9" y="85.0" width="5.0" height="1.0" fill="#c6c6c6"/><rect x="67.6" y="85.0" width="8.6" height="1.0" fill="#c6c6c6"/><rect x="77.3" y="85.0" width="7.4" height="1.0" fill="#c6c6c6"/><rect x="86.5" y="85.0" width="8.0" height="1.0" fill="#c6c6c6"/><rect x="96.1" y="85.0" width="8.5" height="1.0" fill="#c6c6c6"/><rect x="106.0" y="85.0" width="5.5" height="1.0" fill="#c6c6c6"/><rect x="112.7" y="85.0" width="7.7" height="1.0" fill="#c6c6c6"/><rect x="121.8" y="85.0" width="4.6" height="1.0" fill="#c6c6c6"/><rect x="127.6" y="85.0" width="5.4" height="1.0" fill="#c6c6c6"/><g fill="#3b6aa8"><circle cx="21" cy="41" r="1.6"/><circle cx="21" cy="52" r="1.6"/><circle cx="21" cy="63.5" r="1.6"/><circle cx="21" cy="83" r="1.6"/></g></svg>
<svg class="a" style="left:44px;top:845px" width="176" height="100" viewBox="0 0 176 100"><rect x="0.5" y="0.5" width="175" height="99" fill="#fff" stroke="#c3c3c3"/><path d="M0,0 L32,0 C26,8 22,14 18,22 C14,30 8,34 0,37 Z" fill="#dcebfa"/><path d="M4,13 C5,11 7,10 9,11 C10,8 12,7 14,7 C16,7 18,9 18,11 C20,11 21,12 21,13 Z" fill="#fff"/><path d="M176,100 L148,100 C157,93 165,86 168,82 C170,78 172,76 176,75 Z" fill="#fae6f8"/><path d="M154,98 C155,96 157,95 159,96 C160,93 162,92 164,92 C166,92 168,94 168,96 C170,96 171,97 171,98 Z" fill="#fff" opacity=".7"/><text x="88" y="16" text-anchor="middle" font-family="Liberation Sans" font-weight="bold" font-size="5.2" fill="#2f4a66" letter-spacing=".2">Comment ça marche internet ?</text></svg>
<!-- slide area -->
<svg class="a" style="left:270px;top:196px" width="1266" height="668" viewBox="270 196 1266 668">
<defs><clipPath id="sc"><rect x="455" y="210" width="1081" height="654"/></clipPath>

</defs>
<rect x="270" y="196" width="1266" height="668" fill="#e6e6e6"/>
<path d="M700,190 L700.9,190.0 L699.6,192.0 L698.3,194.0 L696.9,196.0 L695.5,198.0 L694.0,200.0 L692.4,202.0 L690.8,204.0 L689.2,206.0 L687.6,208.0 L685.9,210.0 L684.1,212.0 L682.3,214.0 L680.6,216.0 L678.7,218.0 L676.9,220.0 L675.0,222.0 L673.1,224.0 L671.2,226.0 L669.3,228.0 L667.4,230.0 L665.4,232.0 L663.5,234.0 L661.5,236.0 L659.6,238.0 L657.6,240.0 L655.6,242.0 L653.7,244.0 L651.7,246.0 L649.8,248.0 L647.8,250.0 L645.9,252.0 L643.9,254.0 L642.0,256.0 L640.1,258.0 L638.2,260.0 L636.3,262.0 L634.4,264.0 L632.6,266.0 L630.7,268.0 L628.9,270.0 L627.1,272.0 L625.3,274.0 L623.6,276.0 L621.8,278.0 L620.1,280.0 L618.4,282.0 L616.8,284.0 L615.1,286.0 L613.5,288.0 L611.9,290.0 L610.3,292.0 L608.8,294.0 L607.3,296.0 L605.8,298.0 L604.3,300.0 L602.9,302.0 L601.5,304.0 L600.1,306.0 L598.8,308.0 L597.5,310.0 L596.2,312.0 L594.9,314.0 L593.7,316.0 L592.4,318.0 L591.2,320.0 L590.1,322.0 L588.9,324.0 L587.8,326.0 L586.7,328.0 L585.7,330.0 L584.6,332.0 L583.6,334.0 L582.6,336.0 L581.6,338.0 L580.6,340.0 L579.7,342.0 L578.8,344.0 L577.8,346.0 L576.9,348.0 L576.1,350.0 L575.2,352.0 L574.3,354.0 L573.5,356.0 L572.6,358.0 L571.8,360.0 L570.9,362.0 L570.1,364.0 L569.3,366.0 L568.5,368.0 L567.6,370.0 L566.8,372.0 L565.9,374.0 L565.1,376.0 L564.2,378.0 L563.4,380.0 L562.5,382.0 L561.6,384.0 L560.7,386.0 L559.7,388.0 L558.8,390.0 L557.8,392.0 L556.8,394.0 L555.7,396.0 L554.6,398.0 L553.5,400.0 L552.4,402.0 L551.2,404.0 L550.0,406.0 L548.7,408.0 L547.3,410.0 L546.0,412.0 L544.5,414.0 L543.0,416.0 L541.5,418.0 L539.9,420.0 L538.2,422.0 L536.4,424.0 L534.6,426.0 L532.7,428.0 L530.7,430.0 L528.6,432.0 L526.4,434.0 L524.2,436.0 L521.8,438.0 L519.4,440.0 L516.8,442.0 L514.1,444.0 L511.4,446.0 L508.5,448.0 L505.5,450.0 L502.3,452.0 L499.1,454.0 L495.7,456.0 L492.1,458.0 L488.7,459.9 L486.7,461.4 L484.7,462.2 L482.7,463.1 L480.7,463.9 L478.7,464.6 L476.7,465.4 L474.7,466.1 L472.7,466.8 L470.7,467.5 L468.7,468.2 L466.7,468.8 L464.7,469.5 L462.7,470.1 L460.7,470.6 L458.7,471.2 L456.7,471.7 L454.7,472.3 L452.7,472.8 L450.7,473.3 L448.7,473.7 L446.7,474.2 L444.7,474.6 L442.7,475.1 L440.7,475.5 L438.7,475.9 L436.7,476.3 L434.7,476.7 L432.7,477.0 L430.7,477.4 L428.7,477.7 L426.7,478.0 L424.7,478.3 L422.7,478.6 L420.7,478.9 L418.7,479.2 L416.7,479.4 L414.7,479.7 L412.7,479.9 L410.7,480.2 L408.7,480.4 L406.7,480.6 L404.7,480.8 L402.7,481.0 L400.7,481.2 L398.7,481.4 L396.7,481.5 L394.7,481.7 L392.7,481.8 L390.7,482.0 L388.7,482.1 L386.7,482.2 L384.7,482.3 L382.7,482.4 L380.7,482.5 L378.7,482.6 L376.7,482.7 L374.7,482.8 L372.7,482.8 L370.7,482.9 L368.7,482.9 L366.7,483.0 L364.7,483.0 L362.7,483.0 L360.7,483.0 L358.7,483.0 L356.7,483.0 L354.7,482.9 L352.7,482.9 L350.7,482.9 L348.7,482.8 L346.7,482.7 L344.7,482.7 L342.7,482.6 L340.7,482.5 L338.7,482.3 L336.7,482.2 L334.7,482.1 L332.7,481.9 L330.7,481.8 L328.7,481.6 L326.7,481.4 L324.7,481.2 L322.7,481.0 L320.7,480.7 L318.7,480.5 L316.7,480.2 L314.7,479.9 L312.7,479.6 L310.7,479.3 L308.7,478.9 L306.7,478.6 L304.7,478.2 L302.7,477.8 L300.7,477.4 L298.7,476.9 L296.7,476.5 L294.7,476.0 L292.7,475.5 L290.7,475.0 L288.7,474.4 L286.7,473.8 L284.7,473.2 L282.7,472.6 L280.7,472.0 L278.7,471.3 L276.7,470.6 L274.7,469.8 L272.7,469.1 L270.7,468.3 L268.7,467.4 L266.7,466.6 L264.7,465.7 L262.7,464.8 L260.7,463.8 L258.7,462.8 L258,190 Z" fill="#c9daea"/>
<rect x="455" y="210" width="1081" height="654" fill="#fff"/>
<path d="M700,190 L700.9,190.0 L699.6,192.0 L698.3,194.0 L696.9,196.0 L695.5,198.0 L694.0,200.0 L692.4,202.0 L690.8,204.0 L689.2,206.0 L687.6,208.0 L685.9,210.0 L684.1,212.0 L682.3,214.0 L680.6,216.0 L678.7,218.0 L676.9,220.0 L675.0,222.0 L673.1,224.0 L671.2,226.0 L669.3,228.0 L667.4,230.0 L665.4,232.0 L663.5,234.0 L661.5,236.0 L659.6,238.0 L657.6,240.0 L655.6,242.0 L653.7,244.0 L651.7,246.0 L649.8,248.0 L647.8,250.0 L645.9,252.0 L643.9,254.0 L642.0,256.0 L640.1,258.0 L638.2,260.0 L636.3,262.0 L634.4,264.0 L632.6,266.0 L630.7,268.0 L628.9,270.0 L627.1,272.0 L625.3,274.0 L623.6,276.0 L621.8,278.0 L620.1,280.0 L618.4,282.0 L616.8,284.0 L615.1,286.0 L613.5,288.0 L611.9,290.0 L610.3,292.0 L608.8,294.0 L607.3,296.0 L605.8,298.0 L604.3,300.0 L602.9,302.0 L601.5,304.0 L600.1,306.0 L598.8,308.0 L597.5,310.0 L596.2,312.0 L594.9,314.0 L593.7,316.0 L592.4,318.0 L591.2,320.0 L590.1,322.0 L588.9,324.0 L587.8,326.0 L586.7,328.0 L585.7,330.0 L584.6,332.0 L583.6,334.0 L582.6,336.0 L581.6,338.0 L580.6,340.0 L579.7,342.0 L578.8,344.0 L577.8,346.0 L576.9,348.0 L576.1,350.0 L575.2,352.0 L574.3,354.0 L573.5,356.0 L572.6,358.0 L571.8,360.0 L570.9,362.0 L570.1,364.0 L569.3,366.0 L568.5,368.0 L567.6,370.0 L566.8,372.0 L565.9,374.0 L565.1,376.0 L564.2,378.0 L563.4,380.0 L562.5,382.0 L561.6,384.0 L560.7,386.0 L559.7,388.0 L558.8,390.0 L557.8,392.0 L556.8,394.0 L555.7,396.0 L554.6,398.0 L553.5,400.0 L552.4,402.0 L551.2,404.0 L550.0,406.0 L548.7,408.0 L547.3,410.0 L546.0,412.0 L544.5,414.0 L543.0,416.0 L541.5,418.0 L539.9,420.0 L538.2,422.0 L536.4,424.0 L534.6,426.0 L532.7,428.0 L530.7,430.0 L528.6,432.0 L526.4,434.0 L524.2,436.0 L521.8,438.0 L519.4,440.0 L516.8,442.0 L514.1,444.0 L511.4,446.0 L508.5,448.0 L505.5,450.0 L502.3,452.0 L499.1,454.0 L495.7,456.0 L492.1,458.0 L488.7,459.9 L486.7,461.4 L484.7,462.2 L482.7,463.1 L480.7,463.9 L478.7,464.6 L476.7,465.4 L474.7,466.1 L472.7,466.8 L470.7,467.5 L468.7,468.2 L466.7,468.8 L464.7,469.5 L462.7,470.1 L460.7,470.6 L458.7,471.2 L456.7,471.7 L454.7,472.3 L452.7,472.8 L450.7,473.3 L448.7,473.7 L446.7,474.2 L444.7,474.6 L442.7,475.1 L440.7,475.5 L438.7,475.9 L436.7,476.3 L434.7,476.7 L432.7,477.0 L430.7,477.4 L428.7,477.7 L426.7,478.0 L424.7,478.3 L422.7,478.6 L420.7,478.9 L418.7,479.2 L416.7,479.4 L414.7,479.7 L412.7,479.9 L410.7,480.2 L408.7,480.4 L406.7,480.6 L404.7,480.8 L402.7,481.0 L400.7,481.2 L398.7,481.4 L396.7,481.5 L394.7,481.7 L392.7,481.8 L390.7,482.0 L388.7,482.1 L386.7,482.2 L384.7,482.3 L382.7,482.4 L380.7,482.5 L378.7,482.6 L376.7,482.7 L374.7,482.8 L372.7,482.8 L370.7,482.9 L368.7,482.9 L366.7,483.0 L364.7,483.0 L362.7,483.0 L360.7,483.0 L358.7,483.0 L356.7,483.0 L354.7,482.9 L352.7,482.9 L350.7,482.9 L348.7,482.8 L346.7,482.7 L344.7,482.7 L342.7,482.6 L340.7,482.5 L338.7,482.3 L336.7,482.2 L334.7,482.1 L332.7,481.9 L330.7,481.8 L328.7,481.6 L326.7,481.4 L324.7,481.2 L322.7,481.0 L320.7,480.7 L318.7,480.5 L316.7,480.2 L314.7,479.9 L312.7,479.6 L310.7,479.3 L308.7,478.9 L306.7,478.6 L304.7,478.2 L302.7,477.8 L300.7,477.4 L298.7,476.9 L296.7,476.5 L294.7,476.0 L292.7,475.5 L290.7,475.0 L288.7,474.4 L286.7,473.8 L284.7,473.2 L282.7,472.6 L280.7,472.0 L278.7,471.3 L276.7,470.6 L274.7,469.8 L272.7,469.1 L270.7,468.3 L268.7,467.4 L266.7,466.6 L264.7,465.7 L262.7,464.8 L260.7,463.8 L258.7,462.8 L258,190 Z" fill="#ddedfc" clip-path="url(#sc)"/>
<line x1="455.5" y1="210" x2="455.5" y2="864" stroke="#b0bfcf" stroke-width="1"/>
<line x1="455" y1="210.5" x2="1536" y2="210.5" stroke="#a9b3bd" stroke-width="1"/>
<path d="M475,295 C478,287 490,281 503,283 C508,270 518,262 529,262 C541,262 550,270 553,281 C562,281 569,287 570,295 Z" fill="#fff"/>
<rect x="555.5" y="349.5" width="1100" height="510" fill="none" stroke="#555" stroke-width="1" stroke-dasharray="2,2"/>
</svg>
<div class="t" style="left:568px;top:292px;font-size:35px;font-weight:bold;color:#1a5078;transform:scaleX(1.18);transform-origin:0 0;text-shadow:2px 2px 3px rgba(0,0,0,.4);-webkit-text-stroke:1.4px #1a5078">Activité :</div>
<div class="t" style="left:585px;top:366px;font-size:24px;color:#0e2a3e;transform:scaleX(1.02);transform-origin:0 0">Click to add text</div>

<!-- dialog -->
<div class="a" style="left:696px;top:418px;width:548px;height:262px;background:#fff;border:1px solid #6d6d6d;box-shadow:2px 3px 14px rgba(0,0,0,.28)"></div>
<div class="a" style="left:697px;top:617px;width:546px;height:62px;background:#f0f0f0"></div>
<div class="t" id="dtitle" style="transform:scaleX(0.90);transform-origin:0 0;left:706px;top:431px;font-size:16px;color:#1a1a1a">GzSQYZyuO.exe - Image incorrecte</div>
<svg class="a" style="left:1214px;top:430px" width="16" height="16" viewBox="0 0 16 16"><path d="M1.5,1.5 L14.5,14.5 M14.5,1.5 L1.5,14.5" stroke="#1a1a1a" stroke-width="1.2"/></svg>
<svg class="a" style="left:723px;top:487px" width="42" height="42" viewBox="0 0 42 42">
<defs><radialGradient id="rg" cx="0.55" cy="0.3" r="0.75"><stop offset="0" stop-color="#e8353b"/><stop offset="0.6" stop-color="#c4161c"/><stop offset="1" stop-color="#8e0c10"/></radialGradient>
<linearGradient id="xg" x1="0" y1="0" x2="1" y2="1"><stop offset="0" stop-color="#ffffff"/><stop offset="1" stop-color="#c9c9c9"/></linearGradient></defs>
<circle cx="20.7" cy="20.5" r="18.4" fill="#8f5656"/>
<circle cx="20.7" cy="20.5" r="17.5" fill="#f6e4e4"/>
<circle cx="20.7" cy="20.5" r="16.2" fill="url(#rg)"/>
<path d="M11.9,11.7 L29.5,29.3 M29.5,11.7 L11.9,29.3" stroke="url(#xg)" stroke-width="5.4"/>
</svg>
<div class="t dm" id="dm0" style="transform:scaleX(0.972);left:775px;top:491.90px;font-size:14px;color:#1a1a1a;transform-origin:0 0">C:\ProgramData\nss3.dll n’est pas conçu pour s’exécuter sous</div>
<div class="t dm" id="dm1" style="transform:scaleX(0.991);left:775px;top:510.65px;font-size:14px;color:#1a1a1a;transform-origin:0 0">Windows ou il contient une erreur. Installez à nouveau le programme</div>
<div class="t dm" id="dm2" style="transform:scaleX(0.996);left:775px;top:529.40px;font-size:14px;color:#1a1a1a;transform-origin:0 0">à l’aide du support d’installation d’origine, ou bien contactez votre</div>
<div class="t dm" id="dm3" style="transform:scaleX(0.998);left:775px;top:548.15px;font-size:14px;color:#1a1a1a;transform-origin:0 0">administrateur système ou le fournisseur du logiciel pour obtenir du</div>
<div class="t dm" id="dm4" style="transform:scaleX(0.988);left:775px;top:566.90px;font-size:14px;color:#1a1a1a;transform-origin:0 0">support. État de l’erreur : 0xc0000428.</div>

<div class="a" style="left:1119px;top:632px;width:102px;height:33px;background:#f0f0f0;border:1px solid #646464;border-right-width:2px;border-bottom-width:2px;box-shadow:inset 1px 1px 0 #fff"></div>
<div class="t" style="left:1160px;top:641px;font-size:15px;color:#1a1a1a;transform:scaleX(0.9);transform-origin:0 0">OK</div>
</body></html>
